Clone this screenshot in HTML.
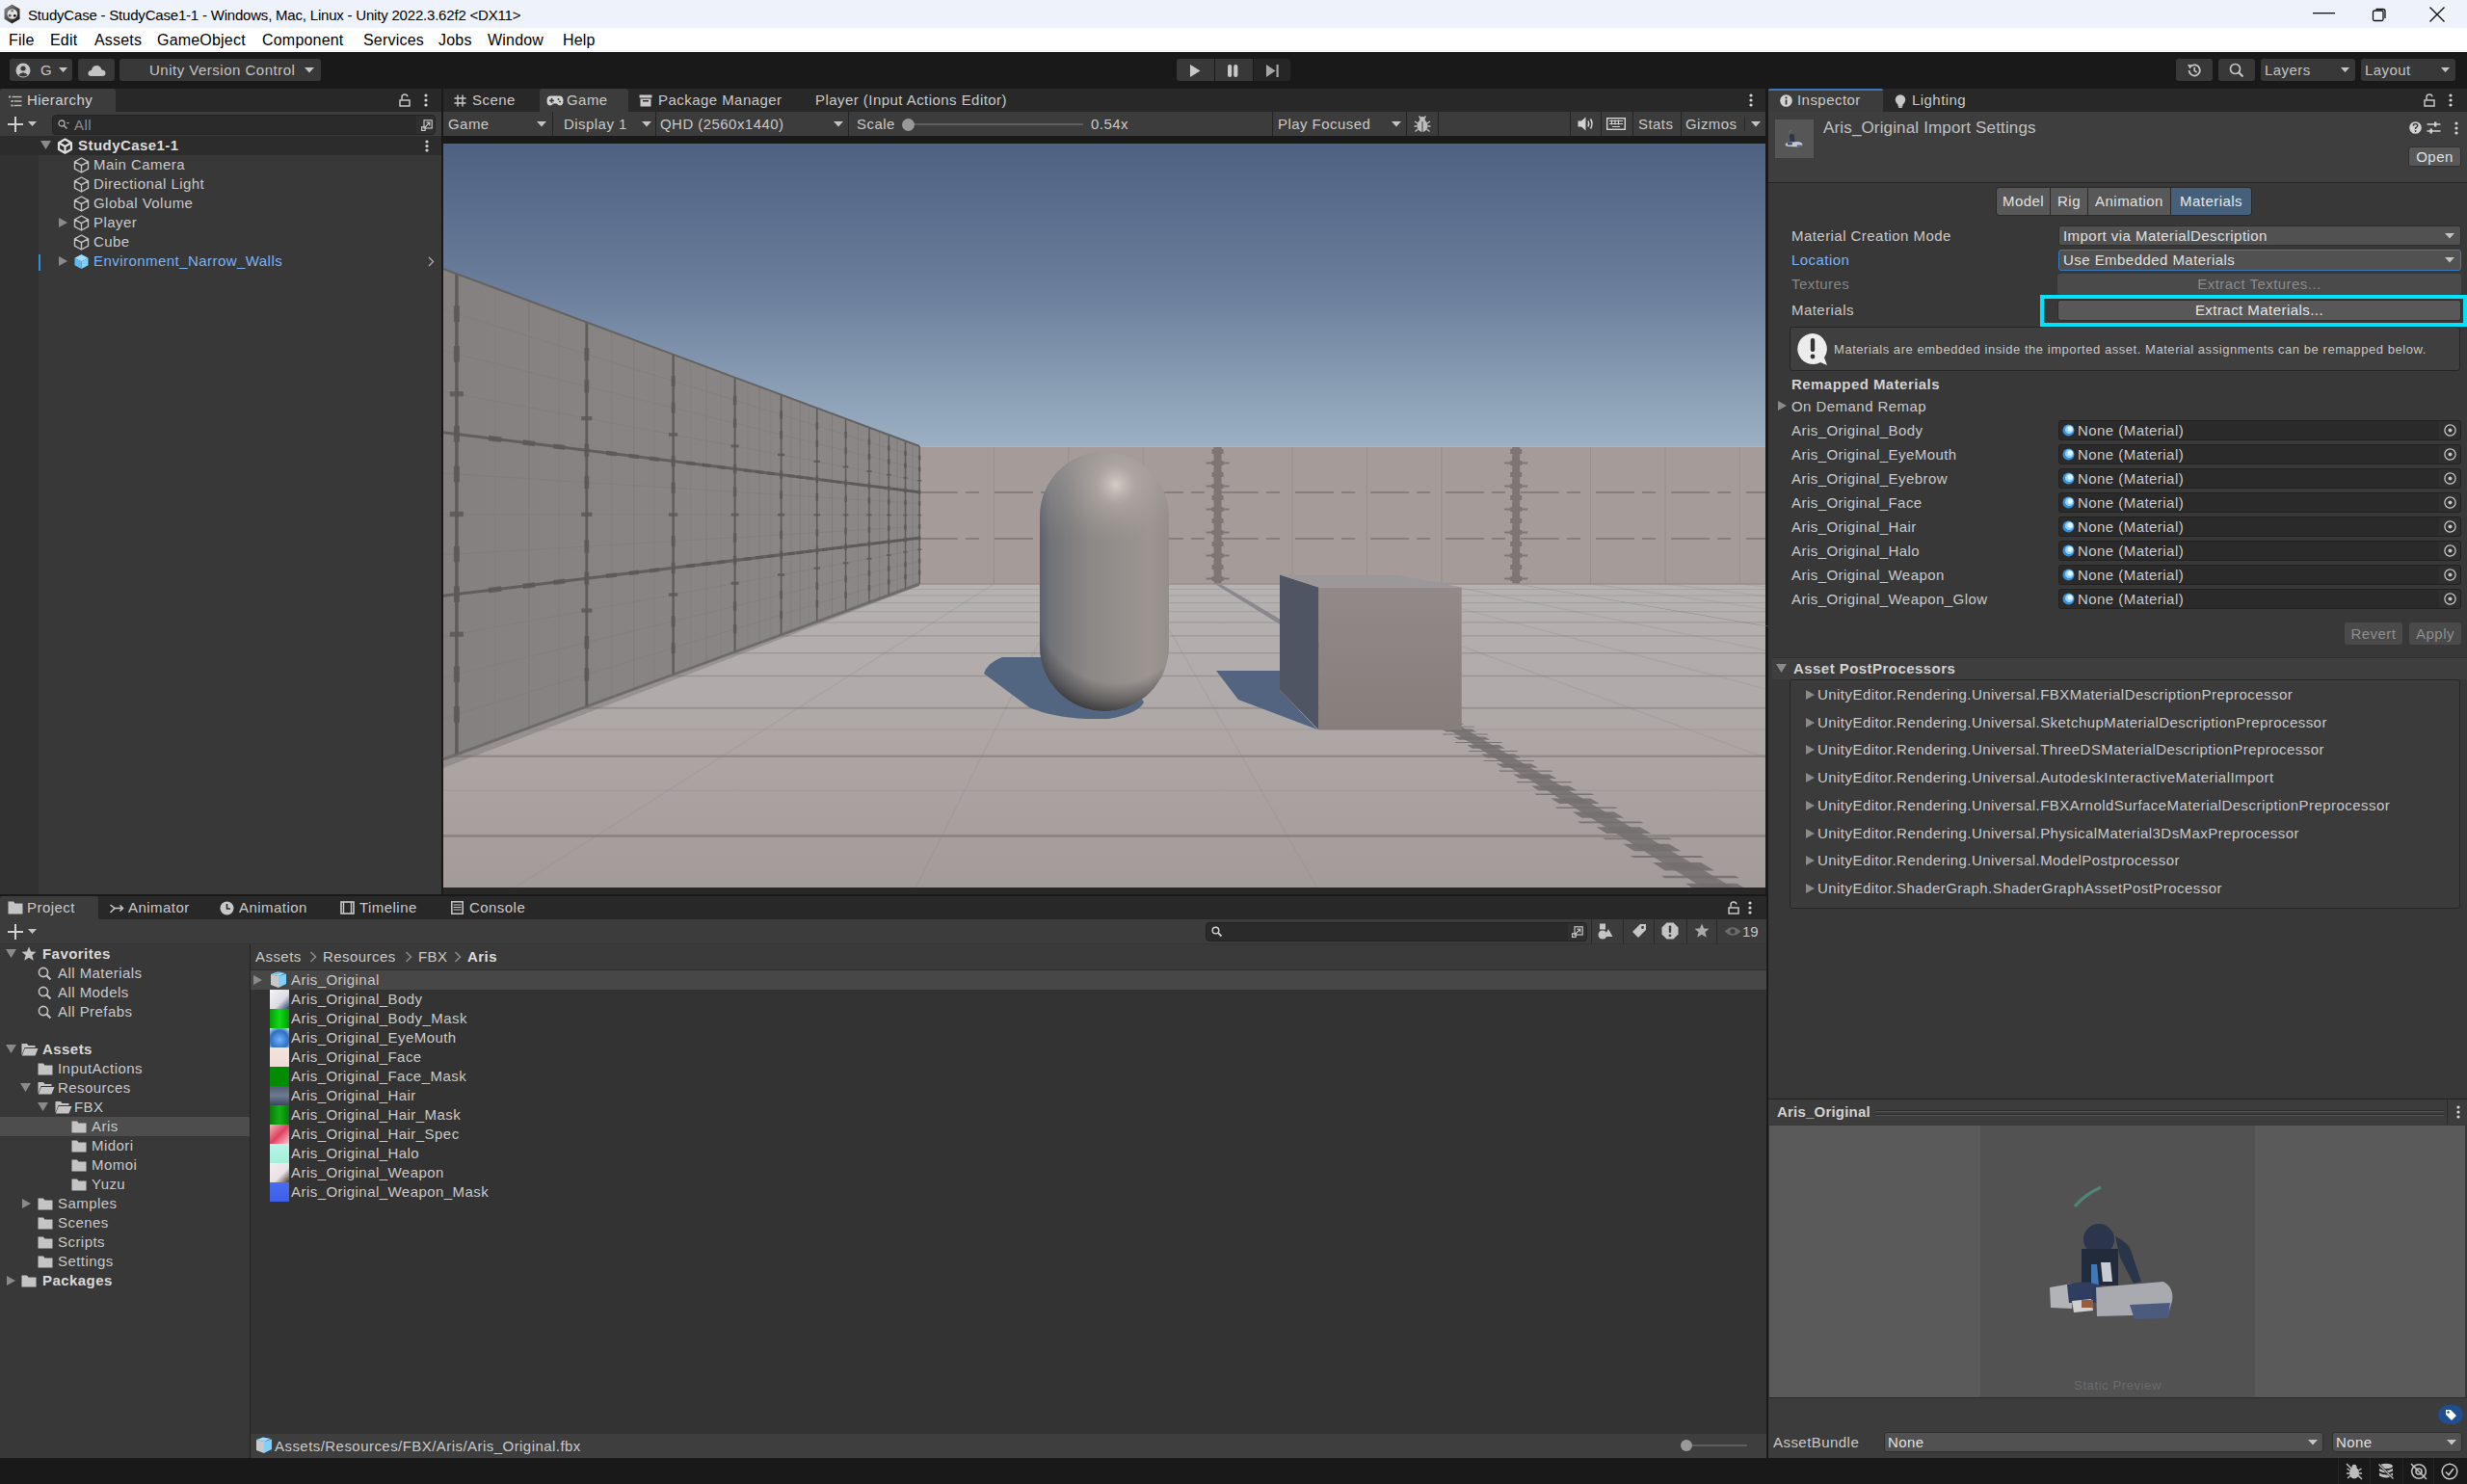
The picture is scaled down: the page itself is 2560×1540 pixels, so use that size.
<!DOCTYPE html>
<html><head><meta charset="utf-8">
<style>
*{box-sizing:border-box;margin:0;padding:0}
html,body{width:2560px;height:1540px;overflow:hidden}
body{background:#191919;font-family:"Liberation Sans",sans-serif;font-size:15px;letter-spacing:0.45px;color:#c9c9c9;position:relative}
.a{position:absolute}
.t{position:absolute;white-space:nowrap}
.tb{background:#282828}
.tab{background:#3c3c3c;border-radius:3px 3px 0 0}
.bar{background:#3c3c3c}
.btn{background:#585858;border-radius:3px}
.dd{background:#515151;border-radius:3px}
svg{position:absolute;overflow:visible}
</style></head><body>
<!-- TITLE BAR -->
<div class="a" style="left:0;top:0;width:2560px;height:29px;background:#eef2fa"></div>
<div class="a" style="left:0;top:29px;width:2560px;height:25px;background:#ffffff"></div>
<div class="a" style="left:0;top:52px;width:2560px;height:1px;background:#eeeeee"></div>
<!-- title contents -->
<svg style="left:3px;top:4px" width="19" height="21" viewBox="0 0 19 21"><defs><linearGradient id="lg1" x1="0" y1="0" x2="1" y2="1"><stop offset="0" stop-color="#9a9a9a"/><stop offset="0.55" stop-color="#444"/><stop offset="1" stop-color="#050505"/></linearGradient></defs><polygon points="9.5,0.6 17.5,5.2 17.5,15.8 9.5,20.4 1.5,15.8 1.5,5.2" fill="url(#lg1)"/><circle cx="9.8" cy="10.5" r="5.3" fill="#e2e2e2"/><circle cx="9.6" cy="7.2" r="1.3" fill="#777"/><circle cx="7.2" cy="12.2" r="1.4" fill="#555"/><circle cx="12.3" cy="12.3" r="1.4" fill="#111"/></svg>
<div class="t" style="left:29px;top:1px;line-height:29px;font-size:15px;letter-spacing:-0.2px;color:#000">StudyCase - StudyCase1-1 - Windows, Mac, Linux - Unity 2022.3.62f2 &lt;DX11&gt;</div>
<svg style="left:2400px;top:13px" width="24" height="2"><rect x="0" y="0" width="23" height="1.3" fill="#111"/></svg>
<svg style="left:2461px;top:7px" width="16" height="16" viewBox="0 0 16 16"><rect x="1.5" y="4" width="10.5" height="10.5" rx="1.5" fill="none" stroke="#111" stroke-width="1.3"/><path d="M4.5,2.5 L12,2.5 Q14,2.5 14,4.5 L14,12" fill="none" stroke="#111" stroke-width="1.3"/></svg>
<svg style="left:2520px;top:6px" width="18" height="18" viewBox="0 0 18 18"><path d="M1.5,1.5 L16.5,16.5 M16.5,1.5 L1.5,16.5" stroke="#111" stroke-width="1.4"/></svg>
<!-- menu -->
<div class="t" style="left:9px;top:29px;line-height:25px;font-size:16px;letter-spacing:0.2px;color:#000">File</div>
<div class="t" style="left:52px;top:29px;line-height:25px;font-size:16px;letter-spacing:0.2px;color:#000">Edit</div>
<div class="t" style="left:98px;top:29px;line-height:25px;font-size:16px;letter-spacing:0.2px;color:#000">Assets</div>
<div class="t" style="left:163px;top:29px;line-height:25px;font-size:16px;letter-spacing:0.2px;color:#000">GameObject</div>
<div class="t" style="left:272px;top:29px;line-height:25px;font-size:16px;letter-spacing:0.2px;color:#000">Component</div>
<div class="t" style="left:377px;top:29px;line-height:25px;font-size:16px;letter-spacing:0.2px;color:#000">Services</div>
<div class="t" style="left:455px;top:29px;line-height:25px;font-size:16px;letter-spacing:0.2px;color:#000">Jobs</div>
<div class="t" style="left:506px;top:29px;line-height:25px;font-size:16px;letter-spacing:0.2px;color:#000">Window</div>
<div class="t" style="left:584px;top:29px;line-height:25px;font-size:16px;letter-spacing:0.2px;color:#000">Help</div>
<!-- TOOLBAR -->
<div class="a" style="left:0;top:54px;width:2560px;height:38px;background:#191919"></div>
<div class="a" style="left:10px;top:61px;width:65px;height:23px;background:#383838;border-radius:3px"></div>
<svg style="left:16px;top:65px" width="16" height="16" viewBox="0 0 16 16"><circle cx="8" cy="8" r="7.5" fill="#c4c4c4"/><circle cx="8" cy="6" r="2.6" fill="#383838"/><path d="M3.2,13 Q8,7.5 12.8,13 Q8,16 3.2,13Z" fill="#383838"/></svg>
<div class="t" style="left:42px;top:61px;line-height:23px;color:#c4c4c4">G</div>
<svg style="left:61px;top:70px" width="10" height="6"><polygon points="0,0 9,0 4.5,5" fill="#c4c4c4"/></svg>
<div class="a" style="left:81px;top:61px;width:38px;height:23px;background:#383838;border-radius:3px"></div>
<svg style="left:91px;top:66px" width="19" height="14" viewBox="0 0 19 14"><path d="M4,13 Q0,13 0.5,9.5 Q1,7 4,7 Q4.5,2.5 9,2 Q13.5,2 14.5,6.5 Q18.5,6.5 18.5,10 Q18.5,13 15,13 Z" fill="#c4c4c4"/></svg>
<div class="a" style="left:124px;top:61px;width:209px;height:23px;background:#383838;border-radius:3px"></div>
<div class="t" style="left:155px;top:61px;line-height:23px;font-size:15px;letter-spacing:0.5px;color:#c4c4c4">Unity Version Control</div>
<svg style="left:316px;top:70px" width="10" height="6"><polygon points="0,0 10,0 5,5.5" fill="#c4c4c4"/></svg>
<div class="a" style="left:1221px;top:61px;width:39px;height:23px;background:#383838;border-radius:3px 0 0 3px"></div>
<div class="a" style="left:1261px;top:61px;width:39px;height:23px;background:#383838"></div>
<div class="a" style="left:1301px;top:61px;width:38px;height:23px;background:#262626;border-radius:0 3px 3px 0"></div>
<svg style="left:1235px;top:67px" width="12" height="13"><polygon points="0,0 10.5,6.5 0,13" fill="#c8c8c8"/></svg>
<svg style="left:1274px;top:67px" width="12" height="13"><rect x="0" y="0" width="4.2" height="13" rx="2" fill="#c8c8c8"/><rect x="6.2" y="0" width="4.2" height="13" rx="2" fill="#c8c8c8"/></svg>
<svg style="left:1314px;top:67px" width="14" height="13"><polygon points="0,0 9.5,6.5 0,13" fill="#a6a6a6"/><rect x="10.5" y="0" width="2.2" height="13" fill="#a6a6a6"/></svg>
<div class="a" style="left:2258px;top:61px;width:38px;height:23px;background:#383838;border-radius:3px"></div>
<svg style="left:2269px;top:65px" width="16" height="16" viewBox="0 0 16 16"><path d="M2.6,8 A5.6,5.6 0 1 0 4.4,3.8" fill="none" stroke="#c4c4c4" stroke-width="1.8"/><polygon points="1,2 6,2.5 3.5,6.5" fill="#c4c4c4"/><path d="M8.2,4.8 L8.2,8.4 L10.6,10" fill="none" stroke="#c4c4c4" stroke-width="1.6"/></svg>
<div class="a" style="left:2302px;top:61px;width:38px;height:23px;background:#383838;border-radius:3px"></div>
<svg style="left:2313px;top:65px" width="16" height="16" viewBox="0 0 16 16"><circle cx="6.5" cy="6.5" r="5" fill="none" stroke="#c4c4c4" stroke-width="1.7"/><path d="M10.2,10.2 L14.5,14.5" stroke="#c4c4c4" stroke-width="2.2"/></svg>
<div class="a" style="left:2346px;top:61px;width:98px;height:23px;background:#383838;border-radius:3px"></div>
<div class="t" style="left:2350px;top:61px;line-height:23px;color:#c4c4c4">Layers</div>
<svg style="left:2429px;top:70px" width="10" height="6"><polygon points="0,0 9,0 4.5,5" fill="#c4c4c4"/></svg>
<div class="a" style="left:2450px;top:61px;width:98px;height:23px;background:#383838;border-radius:3px"></div>
<div class="t" style="left:2454px;top:61px;line-height:23px;color:#c4c4c4">Layout</div>
<svg style="left:2533px;top:70px" width="10" height="6"><polygon points="0,0 9,0 4.5,5" fill="#c4c4c4"/></svg>

<!-- HIERARCHY -->
<div class="a" style="left:0;top:92px;width:458px;height:836px;background:#383838"></div>
<div class="a tb" style="left:0;top:92px;width:458px;height:24px"></div>
<div class="a tab" style="left:0;top:92px;width:120px;height:24px"></div>
<div class="a bar" style="left:0;top:116px;width:458px;height:25px"></div>
<svg style="left:9px;top:99px" width="14" height="12" viewBox="0 0 14 12"><rect x="0" y="0.5" width="2" height="2" fill="#bbb"/><rect x="3.5" y="0.8" width="10" height="1.4" fill="#bbb"/><rect x="2.5" y="5" width="2" height="2" fill="#bbb"/><rect x="5.5" y="5.3" width="8" height="1.4" fill="#bbb"/><rect x="2.5" y="9.5" width="2" height="2" fill="#bbb"/><rect x="5.5" y="9.8" width="8" height="1.4" fill="#bbb"/></svg>
<div class="t" style="left:28px;top:92px;line-height:24px;color:#d2d2d2">Hierarchy</div>
<svg style="left:414px;top:97px" width="12" height="14" viewBox="0 0 12 14"><path d="M3,6.5 L3,3.8 Q3,1 6,1 Q8.6,1 8.9,3.4" fill="none" stroke="#c4c4c4" stroke-width="1.5"/><rect x="1" y="7" width="10" height="6" fill="none" stroke="#c4c4c4" stroke-width="1.5"/></svg>
<svg style="left:440px;top:97px" width="4" height="14"><circle cx="2" cy="2" r="1.6" fill="#d2d2d2"/><circle cx="2" cy="7" r="1.6" fill="#d2d2d2"/><circle cx="2" cy="12" r="1.6" fill="#d2d2d2"/></svg>
<svg style="left:8px;top:121px" width="16" height="16"><rect x="7" y="0" width="2" height="16" fill="#d2d2d2"/><rect x="0" y="7" width="16" height="2" fill="#d2d2d2"/></svg>
<svg style="left:29px;top:126px" width="10" height="6"><polygon points="0,0 9,0 4.5,5" fill="#c4c4c4"/></svg>
<div class="a" style="left:54px;top:119px;width:398px;height:21px;background:#2a2a2a;border:1px solid #222;border-radius:4px"></div>
<div class="a" style="left:432px;top:120px;width:19px;height:19px;background:#303030;border-radius:0 3px 3px 0"></div>
<svg style="left:437px;top:124px" width="12" height="12" viewBox="0 0 12 12"><rect x="3" y="0.8" width="8.2" height="8.2" fill="none" stroke="#c4c4c4" stroke-width="1.2"/><rect x="0.6" y="7.8" width="3.6" height="3.6" fill="none" stroke="#c4c4c4" stroke-width="1.2"/><path d="M3.5,8.5 L8.5,3.5 M5.5,3.2 L8.8,3.2 L8.8,6.5" fill="none" stroke="#c4c4c4" stroke-width="1.2"/></svg>
<svg style="left:60px;top:124px" width="12" height="11" viewBox="0 0 12 11"><circle cx="4" cy="4" r="3" fill="none" stroke="#aaa" stroke-width="1.3"/><path d="M6,6 L9.5,9.5" stroke="#aaa" stroke-width="1.5"/><polygon points="9,3 12,3 10.5,4.8" fill="#aaa"/></svg>
<div class="t" style="left:77px;top:119px;line-height:21px;color:#8c8c8c">All</div>
<div class="a" style="left:0;top:141px;width:458px;height:20px;background:#2c2c2c"></div>
<div class="a" style="left:0;top:161px;width:40px;height:767px;background:#313131"></div>
<svg style="left:42px;top:146px" width="12" height="10"><polygon points="0,0 11,0 5.5,9" fill="#8a8a8a"/></svg>
<svg style="left:59px;top:143px" width="17" height="17" viewBox="0 0 17 17"><path d="M8.5,1.5 L15,5.2 L15,12 L8.5,15.7 L2,12 L2,5.2 Z" fill="none" stroke="#e0e0e0" stroke-width="2.2" stroke-linejoin="round"/><path d="M2.5,5.5 L8.5,9 L14.5,5.5 M8.5,9 L8.5,15.5" fill="none" stroke="#e0e0e0" stroke-width="2.2"/></svg>
<div class="t" style="left:81px;top:141px;line-height:20px;font-weight:bold;color:#dcdcdc">StudyCase1-1</div>
<svg style="left:441px;top:145px" width="4" height="13"><circle cx="2" cy="2" r="1.6" fill="#d2d2d2"/><circle cx="2" cy="6.5" r="1.6" fill="#d2d2d2"/><circle cx="2" cy="11" r="1.6" fill="#d2d2d2"/></svg>
<svg style="left:76px;top:163px" width="17" height="17" viewBox="0 0 17 17"><path d="M8.5,1 L15.5,4.8 L15.5,12.2 L8.5,16 L1.5,12.2 L1.5,4.8 Z M1.5,4.8 L8.5,8.6 L15.5,4.8 M8.5,8.6 L8.5,16" fill="none" stroke="#c4c4c4" stroke-width="1.4" stroke-linejoin="round"/></svg>
<div class="t" style="left:97px;top:161px;line-height:20px">Main Camera</div>
<svg style="left:76px;top:183px" width="17" height="17" viewBox="0 0 17 17"><path d="M8.5,1 L15.5,4.8 L15.5,12.2 L8.5,16 L1.5,12.2 L1.5,4.8 Z M1.5,4.8 L8.5,8.6 L15.5,4.8 M8.5,8.6 L8.5,16" fill="none" stroke="#c4c4c4" stroke-width="1.4" stroke-linejoin="round"/></svg>
<div class="t" style="left:97px;top:181px;line-height:20px">Directional Light</div>
<svg style="left:76px;top:203px" width="17" height="17" viewBox="0 0 17 17"><path d="M8.5,1 L15.5,4.8 L15.5,12.2 L8.5,16 L1.5,12.2 L1.5,4.8 Z M1.5,4.8 L8.5,8.6 L15.5,4.8 M8.5,8.6 L8.5,16" fill="none" stroke="#c4c4c4" stroke-width="1.4" stroke-linejoin="round"/></svg>
<div class="t" style="left:97px;top:201px;line-height:20px">Global Volume</div>
<svg style="left:76px;top:223px" width="17" height="17" viewBox="0 0 17 17"><path d="M8.5,1 L15.5,4.8 L15.5,12.2 L8.5,16 L1.5,12.2 L1.5,4.8 Z M1.5,4.8 L8.5,8.6 L15.5,4.8 M8.5,8.6 L8.5,16" fill="none" stroke="#c4c4c4" stroke-width="1.4" stroke-linejoin="round"/></svg>
<div class="t" style="left:97px;top:221px;line-height:20px">Player</div>
<svg style="left:61px;top:226px" width="10" height="11"><polygon points="0,0 9,5 0,10" fill="#8a8a8a"/></svg>
<svg style="left:76px;top:243px" width="17" height="17" viewBox="0 0 17 17"><path d="M8.5,1 L15.5,4.8 L15.5,12.2 L8.5,16 L1.5,12.2 L1.5,4.8 Z M1.5,4.8 L8.5,8.6 L15.5,4.8 M8.5,8.6 L8.5,16" fill="none" stroke="#c4c4c4" stroke-width="1.4" stroke-linejoin="round"/></svg>
<div class="t" style="left:97px;top:241px;line-height:20px">Cube</div>
<div class="a" style="left:40px;top:264px;width:2px;height:17px;background:#2f8fd8"></div>
<svg style="left:61px;top:266px" width="10" height="11"><polygon points="0,0 9,5 0,10" fill="#8a8a8a"/></svg>
<svg style="left:76px;top:263px" width="17" height="17" viewBox="0 0 17 17"><polygon points="8.5,1 15.5,4.8 8.5,8.6 1.5,4.8" fill="#9fdcff"/><polygon points="1.5,4.8 8.5,8.6 8.5,16 1.5,12.2" fill="#5cbdf0"/><polygon points="15.5,4.8 8.5,8.6 8.5,16 15.5,12.2" fill="#7fd0fa"/></svg>
<div class="t" style="left:97px;top:261px;line-height:20px;color:#7bb2f0">Environment_Narrow_Walls</div>
<svg style="left:444px;top:266px" width="7" height="11"><path d="M1,1 L5.5,5.5 L1,10" fill="none" stroke="#aaa" stroke-width="1.4"/></svg>

<!-- GAME -->
<div class="a" style="left:460px;top:92px;width:1372px;height:836px;background:#282828"></div>
<div class="a tb" style="left:460px;top:92px;width:1372px;height:24px"></div>
<div class="a tab" style="left:560px;top:92px;width:92px;height:24px"></div>
<div class="a bar" style="left:460px;top:116px;width:1372px;height:25px"></div>
<div class="a" style="left:460px;top:141px;width:1372px;height:8px;background:#1a1a1a"></div>
<svg style="left:471px;top:98px" width="13" height="13" viewBox="0 0 13 13"><path d="M4,0.5 L4,12.5 M9,0.5 L9,12.5 M0.5,4 L12.5,4 M0.5,9 L12.5,9" stroke="#c8c8c8" stroke-width="1.4"/></svg>
<div class="t" style="left:490px;top:92px;line-height:24px">Scene</div>
<svg style="left:567px;top:99px" width="18" height="11" viewBox="0 0 18 11"><path d="M4.5,0.5 L13.5,0.5 Q17.5,0.5 17.5,5.5 Q17.5,10.5 14,10.5 Q12,10.5 11,8.5 L7,8.5 Q6,10.5 4,10.5 Q0.5,10.5 0.5,5.5 Q0.5,0.5 4.5,0.5Z" fill="#d2d2d2"/><rect x="3" y="4.6" width="5" height="1.6" fill="#3c3c3c"/><rect x="4.7" y="2.9" width="1.6" height="5" fill="#3c3c3c"/><circle cx="12.5" cy="4" r="1" fill="#3c3c3c"/><circle cx="14" cy="6.5" r="1" fill="#3c3c3c"/></svg>
<div class="t" style="left:588px;top:92px;line-height:24px">Game</div>
<svg style="left:663px;top:98px" width="14" height="13" viewBox="0 0 14 13"><rect x="0.5" y="0.5" width="13" height="3" fill="#c8c8c8"/><path d="M1.5,4.5 L12.5,4.5 L12.5,12.5 L1.5,12.5Z" fill="#c8c8c8"/><rect x="4" y="6" width="6" height="1.5" fill="#282828"/></svg>
<div class="t" style="left:683px;top:92px;line-height:24px">Package Manager</div>
<div class="t" style="left:846px;top:92px;line-height:24px">Player (Input Actions Editor)</div>
<svg style="left:1815px;top:97px" width="4" height="14"><circle cx="2" cy="2" r="1.6" fill="#d2d2d2"/><circle cx="2" cy="7" r="1.6" fill="#d2d2d2"/><circle cx="2" cy="12" r="1.6" fill="#d2d2d2"/></svg>
<div class="t" style="left:465px;top:116px;line-height:25px">Game</div>
<svg style="left:557px;top:126px" width="10" height="6"><polygon points="0,0 10,0 5,5.5" fill="#c4c4c4"/></svg><div class="a" style="left:573px;top:116px;width:1px;height:25px;background:#242424"></div>
<div class="t" style="left:585px;top:116px;line-height:25px">Display 1</div>
<svg style="left:666px;top:126px" width="10" height="6"><polygon points="0,0 10,0 5,5.5" fill="#c4c4c4"/></svg><div class="a" style="left:680px;top:116px;width:1px;height:25px;background:#242424"></div>
<div class="t" style="left:685px;top:116px;line-height:25px">QHD (2560x1440)</div>
<svg style="left:865px;top:126px" width="10" height="6"><polygon points="0,0 10,0 5,5.5" fill="#c4c4c4"/></svg><div class="a" style="left:880px;top:116px;width:1px;height:25px;background:#242424"></div>
<div class="t" style="left:889px;top:116px;line-height:25px">Scale</div>
<div class="a" style="left:942px;top:128px;width:182px;height:2px;background:#5e5e5e"></div>
<div class="a" style="left:936px;top:123px;width:13px;height:13px;border-radius:50%;background:#999"></div>
<div class="t" style="left:1132px;top:116px;line-height:25px">0.54x</div>
<div class="a" style="left:1320px;top:116px;width:1px;height:25px;background:#242424"></div>
<div class="t" style="left:1326px;top:116px;line-height:25px">Play Focused</div>
<svg style="left:1444px;top:126px" width="10" height="6"><polygon points="0,0 10,0 5,5.5" fill="#c4c4c4"/></svg><div class="a" style="left:1459px;top:116px;width:1px;height:25px;background:#242424"></div>
<svg style="left:1466px;top:119px" width="20" height="20" viewBox="0 0 20 20"><ellipse cx="10" cy="11.5" rx="5.5" ry="6.5" fill="#bdbdbd"/><circle cx="10" cy="4.8" r="2.8" fill="#bdbdbd"/><path d="M2,7 L5,9 M18,7 L15,9 M1.5,12 L4.5,12 M18.5,12 L15.5,12 M2.5,17.5 L5.5,15 M17.5,17.5 L14.5,15 M6.5,1.5 L8,3.5 M13.5,1.5 L12,3.5" stroke="#bdbdbd" stroke-width="1.5"/><path d="M10,7 L10,18" stroke="#3c3c3c" stroke-width="1"/></svg>
<div class="a" style="left:1492px;top:116px;width:1px;height:25px;background:#242424"></div><div class="a" style="left:1629px;top:116px;width:1px;height:25px;background:#242424"></div>
<svg style="left:1637px;top:121px" width="17" height="15" viewBox="0 0 17 15"><polygon points="0.5,4.5 4,4.5 8.5,0.5 8.5,14.5 4,10.5 0.5,10.5" fill="#d2d2d2"/><path d="M11,4.5 Q12.5,7.5 11,10.5 M13.5,2.5 Q16.5,7.5 13.5,12.5" fill="none" stroke="#d2d2d2" stroke-width="1.5"/></svg>
<div class="a" style="left:1661px;top:116px;width:1px;height:25px;background:#242424"></div>
<svg style="left:1667px;top:122px" width="20" height="13" viewBox="0 0 20 13"><rect x="0.7" y="0.7" width="18.6" height="11.6" fill="none" stroke="#d2d2d2" stroke-width="1.4"/><path d="M3,3.5 L17,3.5 M3,6.5 L17,6.5 M6,9.5 L14,9.5 M5.5,2.5 L5.5,7.5 M9,2.5 L9,7.5 M12.5,2.5 L12.5,7.5" stroke="#d2d2d2" stroke-width="1.2"/></svg>
<div class="a" style="left:1694px;top:116px;width:1px;height:25px;background:#242424"></div>
<div class="t" style="left:1700px;top:116px;line-height:25px">Stats</div>
<div class="a" style="left:1744px;top:116px;width:1px;height:25px;background:#242424"></div>
<div class="t" style="left:1749px;top:116px;line-height:25px">Gizmos</div>
<div class="a" style="left:1810px;top:121px;width:1px;height:15px;background:#2a2a2a"></div>
<svg style="left:1817px;top:126px" width="10" height="6"><polygon points="0,0 10,0 5,5.5" fill="#c4c4c4"/></svg>
<svg class="a" style="left:460px;top:149px" width="1372" height="772" viewBox="460 149 1372 772">
<defs>
<linearGradient id="sky" x1="0" y1="149" x2="0" y2="463" gradientUnits="userSpaceOnUse">
<stop offset="0" stop-color="#4e6181"/><stop offset="0.5" stop-color="#6c809d"/><stop offset="1" stop-color="#9cb0c3"/></linearGradient>
<linearGradient id="floor" x1="0" y1="606" x2="0" y2="921" gradientUnits="userSpaceOnUse">
<stop offset="0" stop-color="#b7b2b2"/><stop offset="1" stop-color="#a39b99"/></linearGradient>
<linearGradient id="lwall" x1="460" y1="0" x2="954" y2="0" gradientUnits="userSpaceOnUse">
<stop offset="0" stop-color="#858181"/><stop offset="1" stop-color="#8c8888"/></linearGradient>
<linearGradient id="capH" x1="1079" y1="0" x2="1213" y2="0" gradientUnits="userSpaceOnUse">
<stop offset="0" stop-color="#5b606c"/><stop offset="0.08" stop-color="#727378"/><stop offset="0.4" stop-color="#8d8986"/><stop offset="0.85" stop-color="#9c9592"/><stop offset="1" stop-color="#948e8b"/></linearGradient>
<radialGradient id="capHi" cx="1158" cy="503" r="60" gradientUnits="userSpaceOnUse">
<stop offset="0" stop-color="#d8d0ca" stop-opacity="0.95"/><stop offset="0.35" stop-color="#b9b1ad" stop-opacity="0.5"/><stop offset="1" stop-color="#a09894" stop-opacity="0"/></radialGradient>
<radialGradient id="capV" cx="1158" cy="628" r="112" gradientUnits="userSpaceOnUse">
<stop offset="0" stop-color="#333336" stop-opacity="0"/><stop offset="0.72" stop-color="#333336" stop-opacity="0"/><stop offset="0.86" stop-color="#333336" stop-opacity="0.4"/><stop offset="1" stop-color="#2e2e31" stop-opacity="0.85"/></radialGradient>
<linearGradient id="capT" x1="0" y1="469" x2="0" y2="560" gradientUnits="userSpaceOnUse">
<stop offset="0" stop-color="#aaa3a0" stop-opacity="0.5"/><stop offset="1" stop-color="#aaa3a0" stop-opacity="0"/></linearGradient>
<linearGradient id="cubeF" x1="0" y1="609" x2="0" y2="757" gradientUnits="userSpaceOnUse">
<stop offset="0" stop-color="#918a88"/><stop offset="1" stop-color="#867e7b"/></linearGradient>
<clipPath id="capclip"><rect x="1079" y="469" width="134" height="269" rx="67" ry="67"/></clipPath>
</defs>
<rect x="460" y="149" width="1372" height="315" fill="url(#sky)"/>
<polygon points="460,788 954,606 1832,606 1832,921 460,921" fill="url(#floor)"/>
<line x1="939.0" y1="611.5" x2="1832" y2="611.5" stroke="#7a7372" stroke-width="0.85" stroke-opacity="0.29" />
<line x1="921.5" y1="618.0" x2="1832" y2="618.0" stroke="#7a7372" stroke-width="0.91" stroke-opacity="0.30" />
<line x1="900.8" y1="625.6" x2="1832" y2="625.6" stroke="#7a7372" stroke-width="0.98" stroke-opacity="0.31" />
<line x1="876.1" y1="634.7" x2="1832" y2="634.7" stroke="#7a7372" stroke-width="1.06" stroke-opacity="0.32" />
<line x1="845.8" y1="645.9" x2="1832" y2="645.9" stroke="#7a7372" stroke-width="1.16" stroke-opacity="0.34" />
<line x1="808.0" y1="659.8" x2="1832" y2="659.8" stroke="#7a7372" stroke-width="1.29" stroke-opacity="0.36" />
<line x1="759.4" y1="677.7" x2="1832" y2="677.7" stroke="#7a7372" stroke-width="1.45" stroke-opacity="0.38" />
<line x1="694.7" y1="701.5" x2="1832" y2="701.5" stroke="#7a7372" stroke-width="1.67" stroke-opacity="0.42" />
<line x1="604.2" y1="734.8" x2="1832" y2="734.8" stroke="#7a7372" stroke-width="1.97" stroke-opacity="0.46" />
<line x1="468.9" y1="784.7" x2="1832" y2="784.7" stroke="#7a7372" stroke-width="2.42" stroke-opacity="0.54" />
<line x1="460.0" y1="867.5" x2="1832" y2="867.5" stroke="#7a7372" stroke-width="3.18" stroke-opacity="0.58" />
<line x1="544.1" y1="757.0" x2="1832" y2="757.0" stroke="#7a7372" stroke-width="1" stroke-opacity="0.22"/>
<line x1="460.0" y1="820.2" x2="1832" y2="820.2" stroke="#7a7372" stroke-width="1" stroke-opacity="0.22"/>
<polygon points="460,788 954,606 954,608 460,797" fill="#6a6464" fill-opacity="0.35"/>
<line x1="1031.4" y1="606" x2="534.4" y2="921.0" stroke="#8a8382" stroke-width="1.3" stroke-opacity="0.22"/>
<line x1="1108.8" y1="606" x2="950.4" y2="921.0" stroke="#8a8382" stroke-width="1.3" stroke-opacity="0.22"/>
<line x1="1186.2" y1="606" x2="1366.5" y2="921.0" stroke="#8a8382" stroke-width="1.3" stroke-opacity="0.22"/>
<line x1="1341.0" y1="606" x2="1832.0" y2="786.4" stroke="#8a8382" stroke-width="1.3" stroke-opacity="0.22"/>
<line x1="1418.4" y1="606" x2="1832.0" y2="714.9" stroke="#8a8382" stroke-width="1.3" stroke-opacity="0.22"/>
<line x1="1495.8" y1="606" x2="1832.0" y2="675.0" stroke="#8a8382" stroke-width="1.3" stroke-opacity="0.22"/>
<line x1="1650.6" y1="606" x2="1832.0" y2="631.8" stroke="#8a8382" stroke-width="1.3" stroke-opacity="0.22"/>
<line x1="1728.0" y1="606" x2="1832.0" y2="618.8" stroke="#8a8382" stroke-width="1.3" stroke-opacity="0.22"/>
<line x1="1805.4" y1="606" x2="1832.0" y2="608.9" stroke="#8a8382" stroke-width="1.3" stroke-opacity="0.22"/>
<polygon points="1260.7,606.0 1266.5,606.0 1425.1,700.0 1411.8,700.0" fill="#85838a" fill-opacity="0.9"/>
<polygon points="1411.8,700.0 1425.1,700.0 1798.1,921.0 1766.9,921.0" fill="#74706f" fill-opacity="0.85"/>
<polygon points="1484.1,748.9 1514.0,748.9 1519.0,751.9 1488.7,751.9" fill="#74706f" fill-opacity="0.9"/>
<polygon points="1484.3,753.7 1529.5,753.7 1530.9,754.5 1485.6,754.5" fill="#74706f" fill-opacity="0.9"/>
<polygon points="1495.9,756.4 1526.8,756.4 1532.2,759.6 1500.9,759.6" fill="#74706f" fill-opacity="0.9"/>
<polygon points="1496.5,761.6 1543.2,761.6 1544.7,762.4 1497.8,762.4" fill="#74706f" fill-opacity="0.9"/>
<polygon points="1508.6,764.5 1540.6,764.5 1546.4,767.8 1514.0,767.8" fill="#74706f" fill-opacity="0.9"/>
<polygon points="1509.5,770.0 1558.0,770.0 1559.6,770.9 1510.9,770.9" fill="#74706f" fill-opacity="0.9"/>
<polygon points="1522.3,773.1 1555.5,773.1 1561.7,776.8 1528.0,776.8" fill="#74706f" fill-opacity="0.9"/>
<polygon points="1523.5,779.1 1573.9,779.1 1575.6,780.1 1525.0,780.1" fill="#74706f" fill-opacity="0.9"/>
<polygon points="1537.0,782.4 1571.5,782.4 1578.2,786.4 1543.2,786.4" fill="#74706f" fill-opacity="0.9"/>
<polygon points="1538.6,788.9 1591.0,788.9 1592.9,790.0 1540.3,790.0" fill="#74706f" fill-opacity="0.9"/>
<polygon points="1552.9,792.5 1588.8,792.5 1596.1,796.8 1559.6,796.8" fill="#74706f" fill-opacity="0.9"/>
<polygon points="1555.0,799.5 1609.6,799.5 1611.7,800.7 1556.9,800.7" fill="#74706f" fill-opacity="0.9"/>
<polygon points="1570.1,803.5 1607.6,803.5 1615.5,808.1 1577.4,808.1" fill="#74706f" fill-opacity="0.9"/>
<polygon points="1572.9,811.0 1629.8,811.0 1632.1,812.3 1574.8,812.3" fill="#74706f" fill-opacity="0.9"/>
<polygon points="1588.9,815.4 1628.0,815.4 1636.6,820.4 1596.9,820.4" fill="#74706f" fill-opacity="0.9"/>
<polygon points="1592.3,823.6 1651.8,823.6 1654.3,825.0 1594.5,825.0" fill="#74706f" fill-opacity="0.9"/>
<polygon points="1609.4,828.4 1650.3,828.4 1659.8,833.9 1618.1,833.9" fill="#74706f" fill-opacity="0.9"/>
<polygon points="1613.6,837.4 1676.0,837.4 1678.7,839.0 1616.0,839.0" fill="#74706f" fill-opacity="0.9"/>
<polygon points="1631.9,842.6 1674.8,842.6 1685.2,848.7 1641.5,848.7" fill="#74706f" fill-opacity="0.9"/>
<polygon points="1637.0,852.6 1702.5,852.6 1705.5,854.3 1639.7,854.3" fill="#74706f" fill-opacity="0.9"/>
<polygon points="1656.7,858.3 1701.8,858.3 1713.3,865.0 1667.3,865.0" fill="#74706f" fill-opacity="0.9"/>
<polygon points="1662.9,869.4 1731.9,869.4 1735.2,871.2 1665.8,871.2" fill="#74706f" fill-opacity="0.9"/>
<polygon points="1684.2,875.7 1731.6,875.7 1744.4,883.2 1695.9,883.2" fill="#74706f" fill-opacity="0.9"/>
<polygon points="1691.7,888.0 1764.5,888.0 1768.1,890.1 1695.0,890.1" fill="#74706f" fill-opacity="0.9"/>
<polygon points="1714.7,895.1 1764.9,895.1 1779.2,903.4 1727.9,903.4" fill="#74706f" fill-opacity="0.9"/>
<polygon points="1723.9,908.8 1800.9,908.8 1805.0,911.2 1727.5,911.2" fill="#74706f" fill-opacity="0.9"/>
<polygon points="1748.9,916.8 1802.1,916.8 1809.3,921.0 1755.6,921.0" fill="#74706f" fill-opacity="0.9"/>
<polygon points="1572.4,606.0 1574.0,606.0 2134.1,700.0 2130.4,700.0" fill="#85838a" fill-opacity="0.9"/>
<polygon points="2130.4,700.0 2134.1,700.0 3450.9,921.0 3442.3,921.0" fill="#74706f" fill-opacity="0.85"/>
<rect x="954" y="463" width="878" height="143" fill="#a59c99"/>
<line x1="1031.4" y1="463" x2="1031.4" y2="606" stroke="#8f8784" stroke-width="1" stroke-opacity="0.6"/>
<line x1="1108.8" y1="463" x2="1108.8" y2="606" stroke="#8f8784" stroke-width="1" stroke-opacity="0.6"/>
<line x1="1186.2" y1="463" x2="1186.2" y2="606" stroke="#8f8784" stroke-width="1" stroke-opacity="0.6"/>
<rect x="1259.6" y="463" width="8" height="143" fill="#7e7674"/>
<rect x="1257.6" y="466" width="12" height="5" fill="#7e7674"/>
<rect x="1257.6" y="478" width="12" height="5" fill="#7e7674"/>
<rect x="1251.6" y="479.5" width="24" height="2" fill="#7e7674"/>
<rect x="1257.6" y="490" width="12" height="5" fill="#7e7674"/>
<rect x="1257.6" y="502" width="12" height="5" fill="#7e7674"/>
<rect x="1251.6" y="503.5" width="24" height="2" fill="#7e7674"/>
<rect x="1257.6" y="514" width="12" height="5" fill="#7e7674"/>
<rect x="1257.6" y="526" width="12" height="5" fill="#7e7674"/>
<rect x="1251.6" y="527.5" width="24" height="2" fill="#7e7674"/>
<rect x="1257.6" y="538" width="12" height="5" fill="#7e7674"/>
<rect x="1257.6" y="550" width="12" height="5" fill="#7e7674"/>
<rect x="1251.6" y="551.5" width="24" height="2" fill="#7e7674"/>
<rect x="1257.6" y="562" width="12" height="5" fill="#7e7674"/>
<rect x="1257.6" y="574" width="12" height="5" fill="#7e7674"/>
<rect x="1251.6" y="575.5" width="24" height="2" fill="#7e7674"/>
<rect x="1257.6" y="586" width="12" height="5" fill="#7e7674"/>
<rect x="1257.6" y="598" width="12" height="5" fill="#7e7674"/>
<rect x="1251.6" y="599.5" width="24" height="2" fill="#7e7674"/>
<line x1="1341.0" y1="463" x2="1341.0" y2="606" stroke="#8f8784" stroke-width="1" stroke-opacity="0.6"/>
<line x1="1418.4" y1="463" x2="1418.4" y2="606" stroke="#8f8784" stroke-width="1" stroke-opacity="0.6"/>
<line x1="1495.8" y1="463" x2="1495.8" y2="606" stroke="#8f8784" stroke-width="1" stroke-opacity="0.6"/>
<rect x="1569.2" y="463" width="8" height="143" fill="#7e7674"/>
<rect x="1567.2" y="466" width="12" height="5" fill="#7e7674"/>
<rect x="1567.2" y="478" width="12" height="5" fill="#7e7674"/>
<rect x="1561.2" y="479.5" width="24" height="2" fill="#7e7674"/>
<rect x="1567.2" y="490" width="12" height="5" fill="#7e7674"/>
<rect x="1567.2" y="502" width="12" height="5" fill="#7e7674"/>
<rect x="1561.2" y="503.5" width="24" height="2" fill="#7e7674"/>
<rect x="1567.2" y="514" width="12" height="5" fill="#7e7674"/>
<rect x="1567.2" y="526" width="12" height="5" fill="#7e7674"/>
<rect x="1561.2" y="527.5" width="24" height="2" fill="#7e7674"/>
<rect x="1567.2" y="538" width="12" height="5" fill="#7e7674"/>
<rect x="1567.2" y="550" width="12" height="5" fill="#7e7674"/>
<rect x="1561.2" y="551.5" width="24" height="2" fill="#7e7674"/>
<rect x="1567.2" y="562" width="12" height="5" fill="#7e7674"/>
<rect x="1567.2" y="574" width="12" height="5" fill="#7e7674"/>
<rect x="1561.2" y="575.5" width="24" height="2" fill="#7e7674"/>
<rect x="1567.2" y="586" width="12" height="5" fill="#7e7674"/>
<rect x="1567.2" y="598" width="12" height="5" fill="#7e7674"/>
<rect x="1561.2" y="599.5" width="24" height="2" fill="#7e7674"/>
<line x1="1650.6" y1="463" x2="1650.6" y2="606" stroke="#8f8784" stroke-width="1" stroke-opacity="0.6"/>
<line x1="1728.0" y1="463" x2="1728.0" y2="606" stroke="#8f8784" stroke-width="1" stroke-opacity="0.6"/>
<line x1="1805.4" y1="463" x2="1805.4" y2="606" stroke="#8f8784" stroke-width="1" stroke-opacity="0.6"/>
<line x1="954" y1="511" x2="1832" y2="511" stroke="#7e7674" stroke-width="2" stroke-dasharray="40 8 14 16" stroke-opacity="0.75"/>
<line x1="954" y1="559" x2="1832" y2="559" stroke="#7e7674" stroke-width="2" stroke-dasharray="40 8 14 16" stroke-opacity="0.75"/>
<line x1="954" y1="606" x2="1832" y2="606" stroke="#978f8d" stroke-width="1.5"/>
<line x1="954" y1="463.5" x2="1832" y2="463.5" stroke="#b8b4b4" stroke-width="1"/>
<polygon points="460,279 954,463 954,606 460,788" fill="url(#lwall)"/>
<line x1="460" y1="321.4" x2="954" y2="474.9" stroke="#7a7676" stroke-width="1" stroke-opacity="0.35"/>
<line x1="460" y1="363.8" x2="954" y2="486.8" stroke="#7a7676" stroke-width="1" stroke-opacity="0.35"/>
<line x1="460" y1="406.2" x2="954" y2="498.8" stroke="#7a7676" stroke-width="1" stroke-opacity="0.35"/>
<line x1="460" y1="491.1" x2="954" y2="522.6" stroke="#7a7676" stroke-width="1" stroke-opacity="0.35"/>
<line x1="460" y1="533.5" x2="954" y2="534.5" stroke="#7a7676" stroke-width="1" stroke-opacity="0.35"/>
<line x1="460" y1="575.9" x2="954" y2="546.4" stroke="#7a7676" stroke-width="1" stroke-opacity="0.35"/>
<line x1="460" y1="660.8" x2="954" y2="570.2" stroke="#7a7676" stroke-width="1" stroke-opacity="0.35"/>
<line x1="460" y1="703.2" x2="954" y2="582.2" stroke="#7a7676" stroke-width="1" stroke-opacity="0.35"/>
<line x1="460" y1="745.6" x2="954" y2="594.1" stroke="#7a7676" stroke-width="1" stroke-opacity="0.35"/>
<line x1="473.9" y1="284.2" x2="473.9" y2="782.9" stroke="#5b5858" stroke-width="3.60" stroke-opacity="0.9"/>
<rect x="470.9" y="317.4" width="6.0" height="16.6" fill="#5b5858" fill-opacity="0.85"/>
<rect x="470.9" y="359.0" width="6.0" height="16.6" fill="#5b5858" fill-opacity="0.85"/>
<rect x="466.9" y="406.2" width="14.0" height="5.2" fill="#5b5858" fill-opacity="0.85"/>
<rect x="470.9" y="442.1" width="6.0" height="16.6" fill="#5b5858" fill-opacity="0.85"/>
<rect x="470.9" y="483.7" width="6.0" height="16.6" fill="#5b5858" fill-opacity="0.85"/>
<rect x="466.9" y="530.9" width="14.0" height="5.2" fill="#5b5858" fill-opacity="0.85"/>
<rect x="470.9" y="566.8" width="6.0" height="16.6" fill="#5b5858" fill-opacity="0.85"/>
<rect x="470.9" y="608.3" width="6.0" height="16.6" fill="#5b5858" fill-opacity="0.85"/>
<rect x="466.9" y="655.6" width="14.0" height="5.2" fill="#5b5858" fill-opacity="0.85"/>
<rect x="470.9" y="691.5" width="6.0" height="16.6" fill="#5b5858" fill-opacity="0.85"/>
<rect x="470.9" y="733.0" width="6.0" height="16.6" fill="#5b5858" fill-opacity="0.85"/>
<line x1="513.6" y1="299.0" x2="513.6" y2="768.3" stroke="#7c7878" stroke-width="1" stroke-opacity="0.3"/>
<line x1="548.9" y1="312.1" x2="548.9" y2="755.3" stroke="#767272" stroke-width="1" stroke-opacity="0.55"/>
<line x1="580.4" y1="323.9" x2="580.4" y2="743.6" stroke="#7c7878" stroke-width="1" stroke-opacity="0.3"/>
<line x1="608.8" y1="334.4" x2="608.8" y2="733.2" stroke="#5b5858" stroke-width="2.88" stroke-opacity="0.9"/>
<rect x="606.4" y="361.0" width="4.8" height="13.3" fill="#5b5858" fill-opacity="0.85"/>
<rect x="606.4" y="394.2" width="4.8" height="13.3" fill="#5b5858" fill-opacity="0.85"/>
<rect x="603.2" y="432.0" width="11.2" height="4.2" fill="#5b5858" fill-opacity="0.85"/>
<rect x="606.4" y="460.7" width="4.8" height="13.3" fill="#5b5858" fill-opacity="0.85"/>
<rect x="606.4" y="493.9" width="4.8" height="13.3" fill="#5b5858" fill-opacity="0.85"/>
<rect x="603.2" y="531.7" width="11.2" height="4.2" fill="#5b5858" fill-opacity="0.85"/>
<rect x="606.4" y="560.4" width="4.8" height="13.3" fill="#5b5858" fill-opacity="0.85"/>
<rect x="606.4" y="593.6" width="4.8" height="13.3" fill="#5b5858" fill-opacity="0.85"/>
<rect x="603.2" y="631.4" width="11.2" height="4.2" fill="#5b5858" fill-opacity="0.85"/>
<rect x="606.4" y="660.1" width="4.8" height="13.3" fill="#5b5858" fill-opacity="0.85"/>
<rect x="606.4" y="693.3" width="4.8" height="13.3" fill="#5b5858" fill-opacity="0.85"/>
<line x1="634.5" y1="344.0" x2="634.5" y2="723.7" stroke="#7c7878" stroke-width="1" stroke-opacity="0.3"/>
<line x1="657.8" y1="352.7" x2="657.8" y2="715.1" stroke="#767272" stroke-width="1" stroke-opacity="0.55"/>
<line x1="679.1" y1="360.6" x2="679.1" y2="707.3" stroke="#7c7878" stroke-width="1" stroke-opacity="0.3"/>
<line x1="698.6" y1="367.9" x2="698.6" y2="700.1" stroke="#5b5858" stroke-width="2.40" stroke-opacity="0.9"/>
<rect x="696.6" y="390.0" width="4.0" height="11.1" fill="#5b5858" fill-opacity="0.85"/>
<rect x="696.6" y="417.7" width="4.0" height="11.1" fill="#5b5858" fill-opacity="0.85"/>
<rect x="693.9" y="449.2" width="9.3" height="3.5" fill="#5b5858" fill-opacity="0.85"/>
<rect x="696.6" y="473.1" width="4.0" height="11.1" fill="#5b5858" fill-opacity="0.85"/>
<rect x="696.6" y="500.8" width="4.0" height="11.1" fill="#5b5858" fill-opacity="0.85"/>
<rect x="693.9" y="532.3" width="9.3" height="3.5" fill="#5b5858" fill-opacity="0.85"/>
<rect x="696.6" y="556.1" width="4.0" height="11.1" fill="#5b5858" fill-opacity="0.85"/>
<rect x="696.6" y="583.8" width="4.0" height="11.1" fill="#5b5858" fill-opacity="0.85"/>
<rect x="693.9" y="615.3" width="9.3" height="3.5" fill="#5b5858" fill-opacity="0.85"/>
<rect x="696.6" y="639.2" width="4.0" height="11.1" fill="#5b5858" fill-opacity="0.85"/>
<rect x="696.6" y="666.9" width="4.0" height="11.1" fill="#5b5858" fill-opacity="0.85"/>
<line x1="716.5" y1="374.5" x2="716.5" y2="693.5" stroke="#7c7878" stroke-width="1" stroke-opacity="0.3"/>
<line x1="733.1" y1="380.7" x2="733.1" y2="687.4" stroke="#767272" stroke-width="1" stroke-opacity="0.55"/>
<line x1="748.4" y1="386.4" x2="748.4" y2="681.8" stroke="#7c7878" stroke-width="1" stroke-opacity="0.3"/>
<line x1="762.6" y1="391.7" x2="762.6" y2="676.5" stroke="#5b5858" stroke-width="2.05" stroke-opacity="0.9"/>
<rect x="760.9" y="410.7" width="3.4" height="9.5" fill="#5b5858" fill-opacity="0.85"/>
<rect x="760.9" y="434.4" width="3.4" height="9.5" fill="#5b5858" fill-opacity="0.85"/>
<rect x="758.6" y="461.4" width="8.0" height="3.0" fill="#5b5858" fill-opacity="0.85"/>
<rect x="760.9" y="481.9" width="3.4" height="9.5" fill="#5b5858" fill-opacity="0.85"/>
<rect x="760.9" y="505.6" width="3.4" height="9.5" fill="#5b5858" fill-opacity="0.85"/>
<rect x="758.6" y="532.6" width="8.0" height="3.0" fill="#5b5858" fill-opacity="0.85"/>
<rect x="760.9" y="553.1" width="3.4" height="9.5" fill="#5b5858" fill-opacity="0.85"/>
<rect x="760.9" y="576.8" width="3.4" height="9.5" fill="#5b5858" fill-opacity="0.85"/>
<rect x="758.6" y="603.8" width="8.0" height="3.0" fill="#5b5858" fill-opacity="0.85"/>
<rect x="760.9" y="624.3" width="3.4" height="9.5" fill="#5b5858" fill-opacity="0.85"/>
<rect x="760.9" y="648.0" width="3.4" height="9.5" fill="#5b5858" fill-opacity="0.85"/>
<line x1="775.8" y1="396.6" x2="775.8" y2="671.6" stroke="#7c7878" stroke-width="1" stroke-opacity="0.3"/>
<line x1="788.2" y1="401.2" x2="788.2" y2="667.1" stroke="#767272" stroke-width="1" stroke-opacity="0.55"/>
<line x1="799.7" y1="405.5" x2="799.7" y2="662.8" stroke="#7c7878" stroke-width="1" stroke-opacity="0.3"/>
<line x1="810.6" y1="409.6" x2="810.6" y2="658.8" stroke="#5b5858" stroke-width="1.79" stroke-opacity="0.9"/>
<rect x="809.1" y="426.2" width="3.0" height="8.3" fill="#5b5858" fill-opacity="0.85"/>
<rect x="809.1" y="447.0" width="3.0" height="8.3" fill="#5b5858" fill-opacity="0.85"/>
<rect x="807.1" y="470.6" width="7.0" height="2.6" fill="#5b5858" fill-opacity="0.85"/>
<rect x="809.1" y="488.5" width="3.0" height="8.3" fill="#5b5858" fill-opacity="0.85"/>
<rect x="809.1" y="509.3" width="3.0" height="8.3" fill="#5b5858" fill-opacity="0.85"/>
<rect x="807.1" y="532.9" width="7.0" height="2.6" fill="#5b5858" fill-opacity="0.85"/>
<rect x="809.1" y="550.8" width="3.0" height="8.3" fill="#5b5858" fill-opacity="0.85"/>
<rect x="809.1" y="571.6" width="3.0" height="8.3" fill="#5b5858" fill-opacity="0.85"/>
<rect x="807.1" y="595.2" width="7.0" height="2.6" fill="#5b5858" fill-opacity="0.85"/>
<rect x="809.1" y="613.1" width="3.0" height="8.3" fill="#5b5858" fill-opacity="0.85"/>
<rect x="809.1" y="633.9" width="3.0" height="8.3" fill="#5b5858" fill-opacity="0.85"/>
<line x1="820.7" y1="413.4" x2="820.7" y2="655.1" stroke="#7c7878" stroke-width="1" stroke-opacity="0.3"/>
<line x1="830.3" y1="416.9" x2="830.3" y2="651.6" stroke="#767272" stroke-width="1" stroke-opacity="0.55"/>
<line x1="839.3" y1="420.3" x2="839.3" y2="648.3" stroke="#7c7878" stroke-width="1" stroke-opacity="0.3"/>
<line x1="847.8" y1="423.5" x2="847.8" y2="645.1" stroke="#5b5858" stroke-width="1.59" stroke-opacity="0.9"/>
<rect x="846.5" y="438.2" width="2.7" height="7.4" fill="#5b5858" fill-opacity="0.85"/>
<rect x="846.5" y="456.7" width="2.7" height="7.4" fill="#5b5858" fill-opacity="0.85"/>
<rect x="844.7" y="477.7" width="6.2" height="2.3" fill="#5b5858" fill-opacity="0.85"/>
<rect x="846.5" y="493.6" width="2.7" height="7.4" fill="#5b5858" fill-opacity="0.85"/>
<rect x="846.5" y="512.1" width="2.7" height="7.4" fill="#5b5858" fill-opacity="0.85"/>
<rect x="844.7" y="533.1" width="6.2" height="2.3" fill="#5b5858" fill-opacity="0.85"/>
<rect x="846.5" y="549.1" width="2.7" height="7.4" fill="#5b5858" fill-opacity="0.85"/>
<rect x="846.5" y="567.5" width="2.7" height="7.4" fill="#5b5858" fill-opacity="0.85"/>
<rect x="844.7" y="588.5" width="6.2" height="2.3" fill="#5b5858" fill-opacity="0.85"/>
<rect x="846.5" y="604.5" width="2.7" height="7.4" fill="#5b5858" fill-opacity="0.85"/>
<rect x="846.5" y="623.0" width="2.7" height="7.4" fill="#5b5858" fill-opacity="0.85"/>
<line x1="863.5" y1="429.3" x2="863.5" y2="639.3" stroke="#767272" stroke-width="1" stroke-opacity="0.55"/>
<line x1="877.6" y1="434.6" x2="877.6" y2="634.1" stroke="#5b5858" stroke-width="1.50" stroke-opacity="0.9"/>
<rect x="876.4" y="447.9" width="2.5" height="6.7" fill="#5b5858" fill-opacity="0.85"/>
<rect x="876.4" y="464.5" width="2.5" height="6.7" fill="#5b5858" fill-opacity="0.85"/>
<rect x="874.8" y="483.4" width="5.6" height="2.1" fill="#5b5858" fill-opacity="0.85"/>
<rect x="876.4" y="497.8" width="2.5" height="6.7" fill="#5b5858" fill-opacity="0.85"/>
<rect x="876.4" y="514.4" width="2.5" height="6.7" fill="#5b5858" fill-opacity="0.85"/>
<rect x="874.8" y="533.3" width="5.6" height="2.1" fill="#5b5858" fill-opacity="0.85"/>
<rect x="876.4" y="547.7" width="2.5" height="6.7" fill="#5b5858" fill-opacity="0.85"/>
<rect x="876.4" y="564.3" width="2.5" height="6.7" fill="#5b5858" fill-opacity="0.85"/>
<rect x="874.8" y="583.2" width="5.6" height="2.1" fill="#5b5858" fill-opacity="0.85"/>
<rect x="876.4" y="597.5" width="2.5" height="6.7" fill="#5b5858" fill-opacity="0.85"/>
<rect x="876.4" y="614.2" width="2.5" height="6.7" fill="#5b5858" fill-opacity="0.85"/>
<line x1="890.4" y1="439.3" x2="890.4" y2="629.4" stroke="#767272" stroke-width="1" stroke-opacity="0.55"/>
<line x1="902.0" y1="443.6" x2="902.0" y2="625.2" stroke="#5b5858" stroke-width="1.50" stroke-opacity="0.9"/>
<rect x="900.7" y="455.7" width="2.5" height="6.1" fill="#5b5858" fill-opacity="0.85"/>
<rect x="900.7" y="470.9" width="2.5" height="6.1" fill="#5b5858" fill-opacity="0.85"/>
<rect x="899.5" y="488.1" width="5.1" height="1.9" fill="#5b5858" fill-opacity="0.85"/>
<rect x="900.7" y="501.1" width="2.5" height="6.1" fill="#5b5858" fill-opacity="0.85"/>
<rect x="900.7" y="516.2" width="2.5" height="6.1" fill="#5b5858" fill-opacity="0.85"/>
<rect x="899.5" y="533.4" width="5.1" height="1.9" fill="#5b5858" fill-opacity="0.85"/>
<rect x="900.7" y="546.5" width="2.5" height="6.1" fill="#5b5858" fill-opacity="0.85"/>
<rect x="900.7" y="561.6" width="2.5" height="6.1" fill="#5b5858" fill-opacity="0.85"/>
<rect x="899.5" y="578.8" width="5.1" height="1.9" fill="#5b5858" fill-opacity="0.85"/>
<rect x="900.7" y="591.9" width="2.5" height="6.1" fill="#5b5858" fill-opacity="0.85"/>
<rect x="900.7" y="607.0" width="2.5" height="6.1" fill="#5b5858" fill-opacity="0.85"/>
<line x1="912.6" y1="447.6" x2="912.6" y2="621.3" stroke="#767272" stroke-width="1" stroke-opacity="0.55"/>
<line x1="922.3" y1="451.2" x2="922.3" y2="617.7" stroke="#5b5858" stroke-width="1.50" stroke-opacity="0.9"/>
<rect x="921.0" y="462.3" width="2.5" height="5.5" fill="#5b5858" fill-opacity="0.85"/>
<rect x="921.0" y="476.2" width="2.5" height="5.5" fill="#5b5858" fill-opacity="0.85"/>
<rect x="920.0" y="491.9" width="4.6" height="1.7" fill="#5b5858" fill-opacity="0.85"/>
<rect x="921.0" y="503.9" width="2.5" height="5.5" fill="#5b5858" fill-opacity="0.85"/>
<rect x="921.0" y="517.8" width="2.5" height="5.5" fill="#5b5858" fill-opacity="0.85"/>
<rect x="920.0" y="533.6" width="4.6" height="1.7" fill="#5b5858" fill-opacity="0.85"/>
<rect x="921.0" y="545.5" width="2.5" height="5.5" fill="#5b5858" fill-opacity="0.85"/>
<rect x="921.0" y="559.4" width="2.5" height="5.5" fill="#5b5858" fill-opacity="0.85"/>
<rect x="920.0" y="575.2" width="4.6" height="1.7" fill="#5b5858" fill-opacity="0.85"/>
<rect x="921.0" y="587.2" width="2.5" height="5.5" fill="#5b5858" fill-opacity="0.85"/>
<rect x="921.0" y="601.0" width="2.5" height="5.5" fill="#5b5858" fill-opacity="0.85"/>
<line x1="931.2" y1="454.5" x2="931.2" y2="614.4" stroke="#767272" stroke-width="1" stroke-opacity="0.55"/>
<line x1="939.5" y1="457.6" x2="939.5" y2="611.4" stroke="#5b5858" stroke-width="1.50" stroke-opacity="0.9"/>
<rect x="938.2" y="467.8" width="2.5" height="5.1" fill="#5b5858" fill-opacity="0.85"/>
<rect x="938.2" y="480.6" width="2.5" height="5.1" fill="#5b5858" fill-opacity="0.85"/>
<rect x="937.3" y="495.2" width="4.3" height="1.6" fill="#5b5858" fill-opacity="0.85"/>
<rect x="938.2" y="506.3" width="2.5" height="5.1" fill="#5b5858" fill-opacity="0.85"/>
<rect x="938.2" y="519.1" width="2.5" height="5.1" fill="#5b5858" fill-opacity="0.85"/>
<rect x="937.3" y="533.7" width="4.3" height="1.6" fill="#5b5858" fill-opacity="0.85"/>
<rect x="938.2" y="544.7" width="2.5" height="5.1" fill="#5b5858" fill-opacity="0.85"/>
<rect x="938.2" y="557.5" width="2.5" height="5.1" fill="#5b5858" fill-opacity="0.85"/>
<rect x="937.3" y="572.1" width="4.3" height="1.6" fill="#5b5858" fill-opacity="0.85"/>
<rect x="938.2" y="583.2" width="2.5" height="5.1" fill="#5b5858" fill-opacity="0.85"/>
<rect x="938.2" y="596.0" width="2.5" height="5.1" fill="#5b5858" fill-opacity="0.85"/>
<line x1="947.1" y1="460.4" x2="947.1" y2="608.6" stroke="#767272" stroke-width="1" stroke-opacity="0.55"/>
<line x1="954.2" y1="463.1" x2="954.2" y2="605.9" stroke="#5b5858" stroke-width="1.50" stroke-opacity="0.9"/>
<rect x="952.9" y="472.6" width="2.5" height="4.8" fill="#5b5858" fill-opacity="0.85"/>
<rect x="952.9" y="484.5" width="2.5" height="4.8" fill="#5b5858" fill-opacity="0.85"/>
<rect x="952.2" y="498.0" width="4.0" height="1.5" fill="#5b5858" fill-opacity="0.85"/>
<rect x="952.9" y="508.3" width="2.5" height="4.8" fill="#5b5858" fill-opacity="0.85"/>
<rect x="952.9" y="520.2" width="2.5" height="4.8" fill="#5b5858" fill-opacity="0.85"/>
<rect x="952.2" y="533.8" width="4.0" height="1.5" fill="#5b5858" fill-opacity="0.85"/>
<rect x="952.9" y="544.0" width="2.5" height="4.8" fill="#5b5858" fill-opacity="0.85"/>
<rect x="952.9" y="555.9" width="2.5" height="4.8" fill="#5b5858" fill-opacity="0.85"/>
<rect x="952.2" y="569.5" width="4.0" height="1.5" fill="#5b5858" fill-opacity="0.85"/>
<rect x="952.9" y="579.7" width="2.5" height="4.8" fill="#5b5858" fill-opacity="0.85"/>
<rect x="952.9" y="591.7" width="2.5" height="4.8" fill="#5b5858" fill-opacity="0.85"/>
<line x1="460" y1="448.7" x2="954" y2="510.7" stroke="#5b5858" stroke-width="3" stroke-opacity="0.85"/>
<line x1="507.0" y1="454.6" x2="520.2" y2="456.2" stroke="#5b5858" stroke-width="5.6" stroke-opacity="0.85"/>
<line x1="542.7" y1="459.0" x2="555.1" y2="460.6" stroke="#5b5858" stroke-width="5.3" stroke-opacity="0.85"/>
<line x1="574.5" y1="463.0" x2="586.3" y2="464.5" stroke="#5b5858" stroke-width="5.0" stroke-opacity="0.85"/>
<line x1="629.1" y1="469.9" x2="639.8" y2="471.2" stroke="#5b5858" stroke-width="4.6" stroke-opacity="0.85"/>
<line x1="652.7" y1="472.9" x2="662.9" y2="474.1" stroke="#5b5858" stroke-width="4.4" stroke-opacity="0.85"/>
<line x1="674.2" y1="475.6" x2="683.9" y2="476.8" stroke="#5b5858" stroke-width="4.2" stroke-opacity="0.85"/>
<line x1="712.0" y1="480.3" x2="721.0" y2="481.4" stroke="#5b5858" stroke-width="3.8" stroke-opacity="0.85"/>
<line x1="728.8" y1="482.4" x2="737.4" y2="483.5" stroke="#5b5858" stroke-width="3.7" stroke-opacity="0.85"/>
<line x1="744.2" y1="484.3" x2="752.5" y2="485.4" stroke="#5b5858" stroke-width="3.5" stroke-opacity="0.85"/>
<line x1="772.0" y1="487.8" x2="779.7" y2="488.8" stroke="#5b5858" stroke-width="3.3" stroke-opacity="0.85"/>
<line x1="784.5" y1="489.4" x2="791.9" y2="490.3" stroke="#5b5858" stroke-width="3.2" stroke-opacity="0.85"/>
<line x1="796.1" y1="490.9" x2="803.3" y2="491.8" stroke="#5b5858" stroke-width="3.1" stroke-opacity="0.85"/>
<line x1="817.3" y1="493.5" x2="824.1" y2="494.4" stroke="#5b5858" stroke-width="2.9" stroke-opacity="0.85"/>
<line x1="827.0" y1="494.7" x2="833.6" y2="495.6" stroke="#5b5858" stroke-width="2.8" stroke-opacity="0.85"/>
<line x1="836.1" y1="495.9" x2="842.5" y2="496.7" stroke="#5b5858" stroke-width="2.7" stroke-opacity="0.85"/>
<line x1="852.9" y1="498.0" x2="858.9" y2="498.7" stroke="#5b5858" stroke-width="2.6" stroke-opacity="0.85"/>
<line x1="860.6" y1="498.9" x2="866.4" y2="499.7" stroke="#5b5858" stroke-width="2.5" stroke-opacity="0.85"/>
<line x1="867.9" y1="499.9" x2="873.6" y2="500.6" stroke="#5b5858" stroke-width="2.5" stroke-opacity="0.85"/>
<line x1="881.4" y1="501.6" x2="886.9" y2="502.2" stroke="#5b5858" stroke-width="2.3" stroke-opacity="0.85"/>
<line x1="887.7" y1="502.3" x2="893.0" y2="503.0" stroke="#5b5858" stroke-width="2.3" stroke-opacity="0.85"/>
<line x1="893.7" y1="503.1" x2="898.9" y2="503.8" stroke="#5b5858" stroke-width="2.2" stroke-opacity="0.85"/>
<line x1="904.9" y1="504.5" x2="909.9" y2="505.1" stroke="#5b5858" stroke-width="2.1" stroke-opacity="0.85"/>
<line x1="910.2" y1="505.2" x2="915.0" y2="505.8" stroke="#5b5858" stroke-width="2.1" stroke-opacity="0.85"/>
<line x1="915.2" y1="505.8" x2="919.9" y2="506.4" stroke="#5b5858" stroke-width="2.0" stroke-opacity="0.85"/>
<line x1="924.6" y1="507.0" x2="929.1" y2="507.5" stroke="#5b5858" stroke-width="2.0" stroke-opacity="0.85"/>
<line x1="929.0" y1="507.5" x2="933.4" y2="508.1" stroke="#5b5858" stroke-width="1.9" stroke-opacity="0.85"/>
<line x1="933.2" y1="508.1" x2="937.6" y2="508.6" stroke="#5b5858" stroke-width="1.9" stroke-opacity="0.85"/>
<line x1="941.2" y1="509.1" x2="945.4" y2="509.6" stroke="#5b5858" stroke-width="1.8" stroke-opacity="0.85"/>
<line x1="945.0" y1="509.5" x2="949.1" y2="510.1" stroke="#5b5858" stroke-width="1.8" stroke-opacity="0.85"/>
<line x1="948.7" y1="510.0" x2="952.7" y2="510.5" stroke="#5b5858" stroke-width="1.7" stroke-opacity="0.85"/>
<line x1="460" y1="618.3" x2="954" y2="558.3" stroke="#5b5858" stroke-width="3" stroke-opacity="0.85"/>
<line x1="507.0" y1="612.6" x2="520.2" y2="611.0" stroke="#5b5858" stroke-width="5.6" stroke-opacity="0.85"/>
<line x1="542.7" y1="608.3" x2="555.1" y2="606.8" stroke="#5b5858" stroke-width="5.3" stroke-opacity="0.85"/>
<line x1="574.5" y1="604.4" x2="586.3" y2="603.0" stroke="#5b5858" stroke-width="5.0" stroke-opacity="0.85"/>
<line x1="629.1" y1="597.8" x2="639.8" y2="596.5" stroke="#5b5858" stroke-width="4.6" stroke-opacity="0.85"/>
<line x1="652.7" y1="594.9" x2="662.9" y2="593.7" stroke="#5b5858" stroke-width="4.4" stroke-opacity="0.85"/>
<line x1="674.2" y1="592.3" x2="683.9" y2="591.1" stroke="#5b5858" stroke-width="4.2" stroke-opacity="0.85"/>
<line x1="712.0" y1="587.7" x2="721.0" y2="586.6" stroke="#5b5858" stroke-width="3.8" stroke-opacity="0.85"/>
<line x1="728.8" y1="585.7" x2="737.4" y2="584.6" stroke="#5b5858" stroke-width="3.7" stroke-opacity="0.85"/>
<line x1="744.2" y1="583.8" x2="752.5" y2="582.8" stroke="#5b5858" stroke-width="3.5" stroke-opacity="0.85"/>
<line x1="772.0" y1="580.4" x2="779.7" y2="579.5" stroke="#5b5858" stroke-width="3.3" stroke-opacity="0.85"/>
<line x1="784.5" y1="578.9" x2="791.9" y2="578.0" stroke="#5b5858" stroke-width="3.2" stroke-opacity="0.85"/>
<line x1="796.1" y1="577.5" x2="803.3" y2="576.6" stroke="#5b5858" stroke-width="3.1" stroke-opacity="0.85"/>
<line x1="817.3" y1="574.9" x2="824.1" y2="574.1" stroke="#5b5858" stroke-width="2.9" stroke-opacity="0.85"/>
<line x1="827.0" y1="573.8" x2="833.6" y2="573.0" stroke="#5b5858" stroke-width="2.8" stroke-opacity="0.85"/>
<line x1="836.1" y1="572.7" x2="842.5" y2="571.9" stroke="#5b5858" stroke-width="2.7" stroke-opacity="0.85"/>
<line x1="852.9" y1="570.6" x2="858.9" y2="569.9" stroke="#5b5858" stroke-width="2.6" stroke-opacity="0.85"/>
<line x1="860.6" y1="569.7" x2="866.4" y2="569.0" stroke="#5b5858" stroke-width="2.5" stroke-opacity="0.85"/>
<line x1="867.9" y1="568.8" x2="873.6" y2="568.1" stroke="#5b5858" stroke-width="2.5" stroke-opacity="0.85"/>
<line x1="881.4" y1="567.1" x2="886.9" y2="566.5" stroke="#5b5858" stroke-width="2.3" stroke-opacity="0.85"/>
<line x1="887.7" y1="566.4" x2="893.0" y2="565.7" stroke="#5b5858" stroke-width="2.3" stroke-opacity="0.85"/>
<line x1="893.7" y1="565.7" x2="898.9" y2="565.0" stroke="#5b5858" stroke-width="2.2" stroke-opacity="0.85"/>
<line x1="904.9" y1="564.3" x2="909.9" y2="563.7" stroke="#5b5858" stroke-width="2.1" stroke-opacity="0.85"/>
<line x1="910.2" y1="563.7" x2="915.0" y2="563.1" stroke="#5b5858" stroke-width="2.1" stroke-opacity="0.85"/>
<line x1="915.2" y1="563.1" x2="919.9" y2="562.5" stroke="#5b5858" stroke-width="2.0" stroke-opacity="0.85"/>
<line x1="924.6" y1="561.9" x2="929.1" y2="561.4" stroke="#5b5858" stroke-width="2.0" stroke-opacity="0.85"/>
<line x1="929.0" y1="561.4" x2="933.4" y2="560.8" stroke="#5b5858" stroke-width="1.9" stroke-opacity="0.85"/>
<line x1="933.2" y1="560.9" x2="937.6" y2="560.3" stroke="#5b5858" stroke-width="1.9" stroke-opacity="0.85"/>
<line x1="941.2" y1="559.9" x2="945.4" y2="559.4" stroke="#5b5858" stroke-width="1.8" stroke-opacity="0.85"/>
<line x1="945.0" y1="559.4" x2="949.1" y2="558.9" stroke="#5b5858" stroke-width="1.8" stroke-opacity="0.85"/>
<line x1="948.7" y1="559.0" x2="952.7" y2="558.5" stroke="#5b5858" stroke-width="1.7" stroke-opacity="0.85"/>
<line x1="460" y1="279" x2="954" y2="463" stroke="#656262" stroke-width="2"/>
<line x1="460" y1="788" x2="954" y2="606" stroke="#6a6565" stroke-width="3" stroke-opacity="0.8"/>
<path d="M1021,699 Q1024,688 1040,682 L1120,682 L1183,722 L1187,729 Q1180,741 1150,746 L1128,746 Q1090,744 1068,734 Z" fill="#536681"/>
<polygon points="1262,696 1328,696 1328,716 1367,757 1285,726" fill="#52647f"/>
<rect x="1079" y="469" width="134" height="269" rx="67" ry="67" fill="url(#capH)"/>
<g clip-path="url(#capclip)"><rect x="1079" y="469" width="134" height="269" fill="url(#capT)"/><rect x="1079" y="469" width="134" height="269" fill="url(#capHi)"/><rect x="1079" y="645" width="134" height="95" fill="url(#capV)"/></g>
<polygon points="1328,596.5 1368.5,609.6 1368.5,757.4 1328,716" fill="#4f5562"/>
<polygon points="1328,596.5 1449,596.5 1516.7,609.6 1368.5,609.6" fill="#9c979a"/>
<rect x="1368.5" y="609.6" width="148.2" height="147.8" fill="url(#cubeF)"/>
</svg>

<!-- INSPECTOR -->
<div class="a" style="left:1835px;top:92px;width:725px;height:1421px;background:#383838"></div>
<div class="a tb" style="left:1835px;top:92px;width:725px;height:24px"></div>
<div class="a tab" style="left:1835px;top:92px;width:119px;height:24px"></div>
<div class="a" style="left:1835px;top:92px;width:119px;height:2px;background:#3a79bb;border-radius:3px 3px 0 0"></div>
<svg style="left:1847px;top:98px" width="13" height="13" viewBox="0 0 13 13"><circle cx="6.5" cy="6.5" r="6.3" fill="#d2d2d2"/><rect x="5.6" y="5.5" width="1.8" height="5" fill="#3c3c3c"/><circle cx="6.5" cy="3.4" r="1.1" fill="#3c3c3c"/></svg>
<div class="t" style="left:1865px;top:92px;line-height:24px">Inspector</div>
<svg style="left:1966px;top:98px" width="12" height="14" viewBox="0 0 12 14"><circle cx="6" cy="5.5" r="5.2" fill="#c8c8c8"/><rect x="3.5" y="9" width="5" height="3.5" fill="#c8c8c8"/><rect x="4.2" y="12.5" width="3.6" height="1.5" fill="#c8c8c8"/></svg>
<div class="t" style="left:1984px;top:92px;line-height:24px">Lighting</div>
<svg style="left:2515px;top:97px" width="12" height="14" viewBox="0 0 12 14"><path d="M3,6.5 L3,3.8 Q3,1 6,1 Q8.6,1 8.9,3.4" fill="none" stroke="#c4c4c4" stroke-width="1.5"/><rect x="1" y="7" width="10" height="6" fill="none" stroke="#c4c4c4" stroke-width="1.5"/></svg>
<svg style="left:2541px;top:97px" width="4" height="14"><circle cx="2" cy="2" r="1.6" fill="#d2d2d2"/><circle cx="2" cy="7" r="1.6" fill="#d2d2d2"/><circle cx="2" cy="12" r="1.6" fill="#d2d2d2"/></svg>
<div class="a" style="left:1835px;top:116px;width:725px;height:73px;background:#3e3e3e"></div>
<div class="a" style="left:1835px;top:189px;width:725px;height:1px;background:#242424"></div>
<div class="a" style="left:1842px;top:124px;width:40px;height:40px;background:#565656"></div>
<svg style="left:1852px;top:132px" width="24" height="24" viewBox="0 0 24 24"><path d="M4,6 L7,3" stroke="#4a8f80" stroke-width="0.8"/><ellipse cx="7.5" cy="9.5" rx="2.6" ry="2.6" fill="#2a3450"/><rect x="5.5" y="11" width="5" height="5" fill="#2b3652"/><path d="M0.5,17.5 Q2,15.5 7,15.5 L14,15 Q18,15.5 18.5,18 Q18,20.5 14,20.5 L4,20 Q0.5,19.5 0.5,17.5Z" fill="#c4c7cc"/><path d="M3,16 L8,16 L7.5,18.5 L3,18.5Z" fill="#36507a"/><path d="M13,18.5 L18,18.5 L17,20.5 L12.5,20.5Z" fill="#4a5f85"/></svg>
<div class="t" style="left:1892px;top:121px;line-height:24px;font-size:17px;letter-spacing:0.15px;color:#c0c0c0">Aris_Original Import Settings</div>
<svg style="left:2500px;top:126px" width="13" height="13" viewBox="0 0 13 13"><circle cx="6.5" cy="6.5" r="6.3" fill="#d2d2d2"/><path d="M4.3,4.8 Q4.3,2.6 6.5,2.6 Q8.7,2.6 8.7,4.6 Q8.7,5.9 6.6,6.8 L6.6,8" fill="none" stroke="#3e3e3e" stroke-width="1.5"/><circle cx="6.6" cy="10" r="0.9" fill="#3e3e3e"/></svg>
<svg style="left:2518px;top:125px" width="15" height="15" viewBox="0 0 15 15"><path d="M0.5,4 L14.5,4 M0.5,11 L14.5,11" stroke="#d2d2d2" stroke-width="1.4"/><rect x="8" y="1.5" width="2.4" height="5" fill="#d2d2d2"/><rect x="3.5" y="8.5" width="2.4" height="5" fill="#d2d2d2"/></svg>
<svg style="left:2547px;top:126px" width="4" height="14"><circle cx="2" cy="2" r="1.6" fill="#d2d2d2"/><circle cx="2" cy="7" r="1.6" fill="#d2d2d2"/><circle cx="2" cy="12" r="1.6" fill="#d2d2d2"/></svg>
<div class="a btn" style="left:2499px;top:152px;width:55px;height:21px;border:1px solid #303030"></div>
<div class="t" style="left:2499px;top:152px;width:55px;text-align:center;line-height:21px;color:#e0e0e0">Open</div>
<!-- import tabs -->
<div class="a" style="left:2071px;top:194px;width:266px;height:30px;background:#2a2a2a;border-radius:4px"></div>
<div class="a" style="left:2072px;top:195px;width:55px;height:28px;background:#585858;border-radius:3px 0 0 3px"></div>
<div class="a" style="left:2128px;top:195px;width:38px;height:28px;background:#585858"></div>
<div class="a" style="left:2167px;top:195px;width:85px;height:28px;background:#585858"></div>
<div class="a" style="left:2253px;top:195px;width:83px;height:28px;background:#46607c;border-radius:0 3px 3px 0"></div>
<div class="t" style="left:2072px;top:195px;width:55px;text-align:center;line-height:28px;color:#e0e0e0">Model</div>
<div class="t" style="left:2128px;top:195px;width:38px;text-align:center;line-height:28px;color:#e0e0e0">Rig</div>
<div class="t" style="left:2167px;top:195px;width:85px;text-align:center;line-height:28px;color:#e0e0e0">Animation</div>
<div class="t" style="left:2253px;top:195px;width:83px;text-align:center;line-height:28px;color:#e8e8e8">Materials</div>
<!-- fields -->
<div class="t" style="left:1859px;top:234px;line-height:21px">Material Creation Mode</div>
<div class="a dd" style="left:2136px;top:234px;width:418px;height:21px;border:1px solid #2f2f2f"></div>
<div class="t" style="left:2141px;top:234px;line-height:21px;color:#e0e0e0">Import via MaterialDescription</div>
<svg style="left:2537px;top:242px" width="10" height="6"><polygon points="0,0 10,0 5,5.5" fill="#c4c4c4"/></svg>
<div class="t" style="left:1859px;top:259px;line-height:21px;color:#7bb2f0">Location</div>
<div class="a dd" style="left:2136px;top:259px;width:418px;height:22px;border:1px solid #3a79bb"></div>
<div class="t" style="left:2141px;top:259px;line-height:22px;color:#e0e0e0">Use Embedded Materials</div>
<svg style="left:2537px;top:267px" width="10" height="6"><polygon points="0,0 10,0 5,5.5" fill="#c4c4c4"/></svg>
<div class="t" style="left:1859px;top:284px;line-height:21px;color:#858585">Textures</div>
<div class="a" style="left:2135px;top:284px;width:419px;height:22px;background:#4a4a4a;border-radius:3px"></div>
<div class="t" style="left:2135px;top:284px;width:419px;text-align:center;line-height:22px;color:#8a8a8a">Extract Textures...</div>
<div class="t" style="left:1859px;top:311px;line-height:22px">Materials</div>
<div class="a" style="left:2117px;top:306px;width:443px;height:33px;border:4px solid #00e3fb"></div>
<div class="a btn" style="left:2135px;top:311px;width:419px;height:22px;border:1px solid #2c2c2c"></div>
<div class="t" style="left:2135px;top:311px;width:419px;text-align:center;line-height:22px;color:#e6e6e6">Extract Materials...</div>
<div class="a" style="left:1857px;top:339px;width:696px;height:46px;background:#3f3f3f;border:1px solid #262626;border-radius:3px"></div>
<svg style="left:1864px;top:345px" width="34" height="35" viewBox="0 0 34 35"><path d="M17,1 A16,16 0 1 0 25,31 L32,34 L29,26 A16,16 0 0 0 17,1Z" fill="#ececec"/><rect x="14.8" y="6" width="4.4" height="14" rx="2" fill="#333"/><circle cx="17" cy="25" r="2.4" fill="#333"/></svg>
<div class="t" style="left:1903px;top:353px;line-height:20px;font-size:13px;letter-spacing:0.55px;color:#c8c8c8">Materials are embedded inside the imported asset. Material assignments can be remapped below.</div>
<div class="t" style="left:1859px;top:389px;line-height:20px;font-weight:bold;color:#d2d2d2">Remapped Materials</div>
<svg style="left:1845px;top:416px" width="10" height="11"><polygon points="0,0 9,5 0,10" fill="#8a8a8a"/></svg>
<div class="t" style="left:1859px;top:411px;line-height:21px">On Demand Remap</div>
<div class="t" style="left:1859px;top:436px;line-height:21px">Aris_Original_Body</div>
<div class="a" style="left:2136px;top:436px;width:418px;height:21px;background:#2a2a2a;border:1px solid #212121;border-radius:3px"></div>
<svg style="left:2140px;top:440px" width="13" height="13" viewBox="0 0 13 13"><circle cx="6.5" cy="6.5" r="6" fill="#3a8fd0"/><circle cx="7.3" cy="5.8" r="4.3" fill="#8fd3ff"/><circle cx="8.2" cy="5" r="2.6" fill="#e8f6ff"/></svg>
<div class="t" style="left:2156px;top:436px;line-height:21px">None (Material)</div>
<div class="a" style="left:2531px;top:437px;width:22px;height:19px;background:#2f2f2f;border-radius:0 3px 3px 0"></div>
<svg style="left:2536px;top:440px" width="13" height="13" viewBox="0 0 13 13"><circle cx="6.5" cy="6.5" r="5.6" fill="none" stroke="#c4c4c4" stroke-width="1.3"/><circle cx="6.5" cy="6.5" r="2" fill="#c4c4c4"/></svg>
<div class="t" style="left:1859px;top:461px;line-height:21px">Aris_Original_EyeMouth</div>
<div class="a" style="left:2136px;top:461px;width:418px;height:21px;background:#2a2a2a;border:1px solid #212121;border-radius:3px"></div>
<svg style="left:2140px;top:465px" width="13" height="13" viewBox="0 0 13 13"><circle cx="6.5" cy="6.5" r="6" fill="#3a8fd0"/><circle cx="7.3" cy="5.8" r="4.3" fill="#8fd3ff"/><circle cx="8.2" cy="5" r="2.6" fill="#e8f6ff"/></svg>
<div class="t" style="left:2156px;top:461px;line-height:21px">None (Material)</div>
<div class="a" style="left:2531px;top:462px;width:22px;height:19px;background:#2f2f2f;border-radius:0 3px 3px 0"></div>
<svg style="left:2536px;top:465px" width="13" height="13" viewBox="0 0 13 13"><circle cx="6.5" cy="6.5" r="5.6" fill="none" stroke="#c4c4c4" stroke-width="1.3"/><circle cx="6.5" cy="6.5" r="2" fill="#c4c4c4"/></svg>
<div class="t" style="left:1859px;top:486px;line-height:21px">Aris_Original_Eyebrow</div>
<div class="a" style="left:2136px;top:486px;width:418px;height:21px;background:#2a2a2a;border:1px solid #212121;border-radius:3px"></div>
<svg style="left:2140px;top:490px" width="13" height="13" viewBox="0 0 13 13"><circle cx="6.5" cy="6.5" r="6" fill="#3a8fd0"/><circle cx="7.3" cy="5.8" r="4.3" fill="#8fd3ff"/><circle cx="8.2" cy="5" r="2.6" fill="#e8f6ff"/></svg>
<div class="t" style="left:2156px;top:486px;line-height:21px">None (Material)</div>
<div class="a" style="left:2531px;top:487px;width:22px;height:19px;background:#2f2f2f;border-radius:0 3px 3px 0"></div>
<svg style="left:2536px;top:490px" width="13" height="13" viewBox="0 0 13 13"><circle cx="6.5" cy="6.5" r="5.6" fill="none" stroke="#c4c4c4" stroke-width="1.3"/><circle cx="6.5" cy="6.5" r="2" fill="#c4c4c4"/></svg>
<div class="t" style="left:1859px;top:511px;line-height:21px">Aris_Original_Face</div>
<div class="a" style="left:2136px;top:511px;width:418px;height:21px;background:#2a2a2a;border:1px solid #212121;border-radius:3px"></div>
<svg style="left:2140px;top:515px" width="13" height="13" viewBox="0 0 13 13"><circle cx="6.5" cy="6.5" r="6" fill="#3a8fd0"/><circle cx="7.3" cy="5.8" r="4.3" fill="#8fd3ff"/><circle cx="8.2" cy="5" r="2.6" fill="#e8f6ff"/></svg>
<div class="t" style="left:2156px;top:511px;line-height:21px">None (Material)</div>
<div class="a" style="left:2531px;top:512px;width:22px;height:19px;background:#2f2f2f;border-radius:0 3px 3px 0"></div>
<svg style="left:2536px;top:515px" width="13" height="13" viewBox="0 0 13 13"><circle cx="6.5" cy="6.5" r="5.6" fill="none" stroke="#c4c4c4" stroke-width="1.3"/><circle cx="6.5" cy="6.5" r="2" fill="#c4c4c4"/></svg>
<div class="t" style="left:1859px;top:536px;line-height:21px">Aris_Original_Hair</div>
<div class="a" style="left:2136px;top:536px;width:418px;height:21px;background:#2a2a2a;border:1px solid #212121;border-radius:3px"></div>
<svg style="left:2140px;top:540px" width="13" height="13" viewBox="0 0 13 13"><circle cx="6.5" cy="6.5" r="6" fill="#3a8fd0"/><circle cx="7.3" cy="5.8" r="4.3" fill="#8fd3ff"/><circle cx="8.2" cy="5" r="2.6" fill="#e8f6ff"/></svg>
<div class="t" style="left:2156px;top:536px;line-height:21px">None (Material)</div>
<div class="a" style="left:2531px;top:537px;width:22px;height:19px;background:#2f2f2f;border-radius:0 3px 3px 0"></div>
<svg style="left:2536px;top:540px" width="13" height="13" viewBox="0 0 13 13"><circle cx="6.5" cy="6.5" r="5.6" fill="none" stroke="#c4c4c4" stroke-width="1.3"/><circle cx="6.5" cy="6.5" r="2" fill="#c4c4c4"/></svg>
<div class="t" style="left:1859px;top:561px;line-height:21px">Aris_Original_Halo</div>
<div class="a" style="left:2136px;top:561px;width:418px;height:21px;background:#2a2a2a;border:1px solid #212121;border-radius:3px"></div>
<svg style="left:2140px;top:565px" width="13" height="13" viewBox="0 0 13 13"><circle cx="6.5" cy="6.5" r="6" fill="#3a8fd0"/><circle cx="7.3" cy="5.8" r="4.3" fill="#8fd3ff"/><circle cx="8.2" cy="5" r="2.6" fill="#e8f6ff"/></svg>
<div class="t" style="left:2156px;top:561px;line-height:21px">None (Material)</div>
<div class="a" style="left:2531px;top:562px;width:22px;height:19px;background:#2f2f2f;border-radius:0 3px 3px 0"></div>
<svg style="left:2536px;top:565px" width="13" height="13" viewBox="0 0 13 13"><circle cx="6.5" cy="6.5" r="5.6" fill="none" stroke="#c4c4c4" stroke-width="1.3"/><circle cx="6.5" cy="6.5" r="2" fill="#c4c4c4"/></svg>
<div class="t" style="left:1859px;top:586px;line-height:21px">Aris_Original_Weapon</div>
<div class="a" style="left:2136px;top:586px;width:418px;height:21px;background:#2a2a2a;border:1px solid #212121;border-radius:3px"></div>
<svg style="left:2140px;top:590px" width="13" height="13" viewBox="0 0 13 13"><circle cx="6.5" cy="6.5" r="6" fill="#3a8fd0"/><circle cx="7.3" cy="5.8" r="4.3" fill="#8fd3ff"/><circle cx="8.2" cy="5" r="2.6" fill="#e8f6ff"/></svg>
<div class="t" style="left:2156px;top:586px;line-height:21px">None (Material)</div>
<div class="a" style="left:2531px;top:587px;width:22px;height:19px;background:#2f2f2f;border-radius:0 3px 3px 0"></div>
<svg style="left:2536px;top:590px" width="13" height="13" viewBox="0 0 13 13"><circle cx="6.5" cy="6.5" r="5.6" fill="none" stroke="#c4c4c4" stroke-width="1.3"/><circle cx="6.5" cy="6.5" r="2" fill="#c4c4c4"/></svg>
<div class="t" style="left:1859px;top:611px;line-height:21px">Aris_Original_Weapon_Glow</div>
<div class="a" style="left:2136px;top:611px;width:418px;height:21px;background:#2a2a2a;border:1px solid #212121;border-radius:3px"></div>
<svg style="left:2140px;top:615px" width="13" height="13" viewBox="0 0 13 13"><circle cx="6.5" cy="6.5" r="6" fill="#3a8fd0"/><circle cx="7.3" cy="5.8" r="4.3" fill="#8fd3ff"/><circle cx="8.2" cy="5" r="2.6" fill="#e8f6ff"/></svg>
<div class="t" style="left:2156px;top:611px;line-height:21px">None (Material)</div>
<div class="a" style="left:2531px;top:612px;width:22px;height:19px;background:#2f2f2f;border-radius:0 3px 3px 0"></div>
<svg style="left:2536px;top:615px" width="13" height="13" viewBox="0 0 13 13"><circle cx="6.5" cy="6.5" r="5.6" fill="none" stroke="#c4c4c4" stroke-width="1.3"/><circle cx="6.5" cy="6.5" r="2" fill="#c4c4c4"/></svg>
<div class="a" style="left:1857px;top:705px;width:696px;height:238px;background:#3b3b3b;border:1px solid #262626;border-radius:3px"></div>
<svg style="left:1874px;top:716px" width="10" height="11"><polygon points="0,0 9,5 0,10" fill="#8a8a8a"/></svg>
<div class="t" style="left:1886px;top:711.0px;line-height:20px">UnityEditor.Rendering.Universal.FBXMaterialDescriptionPreprocessor</div>
<svg style="left:1874px;top:745px" width="10" height="11"><polygon points="0,0 9,5 0,10" fill="#8a8a8a"/></svg>
<div class="t" style="left:1886px;top:739.7px;line-height:20px">UnityEditor.Rendering.Universal.SketchupMaterialDescriptionPreprocessor</div>
<svg style="left:1874px;top:773px" width="10" height="11"><polygon points="0,0 9,5 0,10" fill="#8a8a8a"/></svg>
<div class="t" style="left:1886px;top:768.4px;line-height:20px">UnityEditor.Rendering.Universal.ThreeDSMaterialDescriptionPreprocessor</div>
<svg style="left:1874px;top:802px" width="10" height="11"><polygon points="0,0 9,5 0,10" fill="#8a8a8a"/></svg>
<div class="t" style="left:1886px;top:797.1px;line-height:20px">UnityEditor.Rendering.Universal.AutodeskInteractiveMaterialImport</div>
<svg style="left:1874px;top:831px" width="10" height="11"><polygon points="0,0 9,5 0,10" fill="#8a8a8a"/></svg>
<div class="t" style="left:1886px;top:825.8px;line-height:20px">UnityEditor.Rendering.Universal.FBXArnoldSurfaceMaterialDescriptionPreprocessor</div>
<svg style="left:1874px;top:860px" width="10" height="11"><polygon points="0,0 9,5 0,10" fill="#8a8a8a"/></svg>
<div class="t" style="left:1886px;top:854.5px;line-height:20px">UnityEditor.Rendering.Universal.PhysicalMaterial3DsMaxPreprocessor</div>
<svg style="left:1874px;top:888px" width="10" height="11"><polygon points="0,0 9,5 0,10" fill="#8a8a8a"/></svg>
<div class="t" style="left:1886px;top:883.2px;line-height:20px">UnityEditor.Rendering.Universal.ModelPostprocessor</div>
<svg style="left:1874px;top:917px" width="10" height="11"><polygon points="0,0 9,5 0,10" fill="#8a8a8a"/></svg>
<div class="t" style="left:1886px;top:911.9px;line-height:20px">UnityEditor.ShaderGraph.ShaderGraphAssetPostProcessor</div>
<div class="a" style="left:2433px;top:646px;width:60px;height:23px;background:#4a4a4a;border-radius:3px"></div>
<div class="t" style="left:2433px;top:646px;width:60px;text-align:center;line-height:23px;color:#8e8e8e">Revert</div>
<div class="a" style="left:2500px;top:646px;width:54px;height:23px;background:#4a4a4a;border-radius:3px"></div>
<div class="t" style="left:2500px;top:646px;width:54px;text-align:center;line-height:23px;color:#8e8e8e">Apply</div>
<div class="a" style="left:1839px;top:682px;width:721px;height:23px;background:#3e3e3e;border-top:1px solid #303030"></div>
<svg style="left:1843px;top:689px" width="12" height="10"><polygon points="0,0 11,0 5.5,9" fill="#8a8a8a"/></svg>
<div class="t" style="left:1861px;top:683px;line-height:22px;font-weight:bold;color:#d2d2d2">Asset PostProcessors</div>


<!-- preview -->
<div class="a" style="left:1835px;top:1140px;width:725px;height:1px;background:#232323"></div>
<div class="a" style="left:1835px;top:1141px;width:725px;height:26px;background:#3c3c3c"></div>
<div class="t" style="left:1844px;top:1141px;line-height:26px;color:#d2d2d2;font-weight:bold;letter-spacing:0.2px">Aris_Original</div>
<div class="a" style="left:1946px;top:1152px;width:590px;height:1px;background:#2a2a2a"></div>
<div class="a" style="left:1946px;top:1153px;width:590px;height:1px;background:#555"></div>
<div class="a" style="left:1946px;top:1156px;width:590px;height:1px;background:#2a2a2a"></div>
<div class="a" style="left:1946px;top:1157px;width:590px;height:1px;background:#555"></div>
<div class="a" style="left:2539px;top:1141px;width:1px;height:26px;background:#2a2a2a"></div>
<svg style="left:2549px;top:1147px" width="4" height="14"><circle cx="2" cy="2" r="1.6" fill="#d2d2d2"/><circle cx="2" cy="7" r="1.6" fill="#d2d2d2"/><circle cx="2" cy="12" r="1.6" fill="#d2d2d2"/></svg>
<div class="a" style="left:1836px;top:1168px;width:722px;height:282px;background:#5a5a5a"></div>
<div class="a" style="left:2055px;top:1168px;width:285px;height:282px;background:#525252"></div>
<div class="t" style="left:2055px;top:1428px;width:285px;text-align:center;line-height:20px;font-size:13px;letter-spacing:0.6px;color:#6c6c6c">Static Preview</div>
<svg style="left:2120px;top:1225px" width="150" height="150" viewBox="2120 1225 150 150"><defs><filter id="mb" x="-10%" y="-10%" width="120%" height="120%"><feGaussianBlur stdDeviation="0.7"/></filter></defs><g filter="url(#mb)" opacity="0.88">
<path d="M2153,1252 Q2163,1240 2180,1232" stroke="#4f9a86" stroke-width="3.2" fill="none" stroke-opacity="0.8"/>
<path d="M2195,1283 Q2210,1290 2212,1300 L2222,1330 L2214,1332 L2200,1305Z" fill="#27324a"/>
<circle cx="2178" cy="1286" r="16" fill="#27324c"/>
<rect x="2160" y="1296" width="38" height="38" fill="#1f2638"/>
<path d="M2170,1312 L2176,1312 L2178,1334 L2170,1334Z" fill="#3f7cc4"/>
<path d="M2180,1310 L2190,1310 L2192,1330 L2182,1330Z" fill="#d8dde6"/>
<path d="M2127,1336 L2150,1332 L2150,1358 L2128,1357Z" fill="#bfc1c6"/>
<path d="M2145,1333 Q2165,1327 2182,1335 L2180,1352 L2147,1352Z" fill="#2c3b63"/>
<path d="M2175,1336 L2245,1330 Q2256,1336 2254,1350 L2250,1364 L2176,1366Z" fill="#b4b7bd"/>
<path d="M2150,1350 L2170,1348 L2172,1360 L2152,1362Z" fill="#e2e2e4"/>
<path d="M2160,1349 L2172,1349 L2172,1357 L2160,1357Z" fill="#a0603a"/>
<path d="M2210,1354 L2252,1352 L2250,1368 L2215,1369Z" fill="#4a5d86"/>
</g></svg>
<div class="a" style="left:1835px;top:1450px;width:725px;height:63px;background:#3c3c3c"></div>
<div class="a" style="left:1835px;top:1450px;width:725px;height:1px;background:#2a2a2a"></div>
<svg style="left:2530px;top:1458px" width="26" height="20" viewBox="0 0 26 20"><rect x="0" y="0" width="26" height="20" rx="10" fill="#1f4f91"/><path d="M8,5 L13,5 L19,11 L14,16 L8,10Z" fill="#fff"/><circle cx="10.5" cy="7.5" r="1.2" fill="#1f4f91"/></svg>
<div class="t" style="left:1840px;top:1486px;line-height:21px">AssetBundle</div>
<div class="a dd" style="left:1955px;top:1486px;width:456px;height:21px;border:1px solid #2f2f2f"></div>
<div class="t" style="left:1959px;top:1486px;line-height:21px;color:#e0e0e0">None</div>
<svg style="left:2395px;top:1494px" width="10" height="6"><polygon points="0,0 10,0 5,5.5" fill="#c4c4c4"/></svg>
<div class="a dd" style="left:2420px;top:1486px;width:135px;height:21px;border:1px solid #2f2f2f"></div>
<div class="t" style="left:2424px;top:1486px;line-height:21px;color:#e0e0e0">None</div>
<svg style="left:2539px;top:1494px" width="10" height="6"><polygon points="0,0 10,0 5,5.5" fill="#c4c4c4"/></svg>
<!-- PROJECT -->
<div class="a" style="left:0;top:930px;width:1833px;height:583px;background:#333333"></div>
<div class="a tb" style="left:0;top:930px;width:1833px;height:24px"></div>
<div class="a tab" style="left:0;top:930px;width:102px;height:24px"></div>
<div class="a bar" style="left:0;top:954px;width:1833px;height:25px"></div>
<div class="a" style="left:0;top:980px;width:259px;height:533px;background:#383838"></div>
<div class="a" style="left:259px;top:980px;width:1px;height:533px;background:#232323"></div>
<svg style="left:8px;top:935px" width="16" height="14" viewBox="0 0 16 14"><path d="M0.5,0.5 L6,0.5 L7.5,2.5 L15.5,2.5 L15.5,13.5 L0.5,13.5Z" fill="#c4c4c4"/></svg>
<div class="t" style="left:28px;top:930px;line-height:24px">Project</div>
<svg style="left:114px;top:936px" width="14" height="13" viewBox="0 0 14 13"><path d="M0.5,3 L5,6.5 L0.5,11 M5,6.5 L13.5,6.5 M10.5,3.5 L13.5,6.5 L10.5,9.5" fill="none" stroke="#c8c8c8" stroke-width="1.5"/></svg>
<div class="t" style="left:133px;top:930px;line-height:24px">Animator</div>
<svg style="left:228px;top:935px" width="15" height="15" viewBox="0 0 15 15"><circle cx="7.5" cy="7.5" r="7" fill="#c8c8c8"/><path d="M7.5,3 L7.5,8 L11,8" fill="none" stroke="#282828" stroke-width="1.6"/></svg>
<div class="t" style="left:248px;top:930px;line-height:24px">Animation</div>
<svg style="left:353px;top:935px" width="15" height="14" viewBox="0 0 15 14"><rect x="1" y="1" width="13" height="12" fill="none" stroke="#c8c8c8" stroke-width="1.6"/><path d="M3.5,1 L3.5,13 M11.5,1 L11.5,13" stroke="#c8c8c8" stroke-width="1.4"/></svg>
<div class="t" style="left:373px;top:930px;line-height:24px">Timeline</div>
<svg style="left:468px;top:935px" width="13" height="14" viewBox="0 0 13 14"><rect x="0.8" y="0.8" width="11.4" height="12.4" fill="none" stroke="#c8c8c8" stroke-width="1.5"/><path d="M2.5,4 L10.5,4 M2.5,6.5 L10.5,6.5 M2.5,9 L10.5,9" stroke="#c8c8c8" stroke-width="1.2"/></svg>
<div class="t" style="left:487px;top:930px;line-height:24px">Console</div>
<svg style="left:1793px;top:935px" width="12" height="14" viewBox="0 0 12 14"><path d="M3,6.5 L3,3.8 Q3,1 6,1 Q8.6,1 8.9,3.4" fill="none" stroke="#c4c4c4" stroke-width="1.5"/><rect x="1" y="7" width="10" height="6" fill="none" stroke="#c4c4c4" stroke-width="1.5"/></svg>
<svg style="left:1814px;top:935px" width="4" height="14"><circle cx="2" cy="2" r="1.6" fill="#d2d2d2"/><circle cx="2" cy="7" r="1.6" fill="#d2d2d2"/><circle cx="2" cy="12" r="1.6" fill="#d2d2d2"/></svg>
<svg style="left:8px;top:959px" width="16" height="16"><rect x="7" y="0" width="2" height="16" fill="#d2d2d2"/><rect x="0" y="7" width="16" height="2" fill="#d2d2d2"/></svg>
<svg style="left:29px;top:964px" width="10" height="6"><polygon points="0,0 9,0 4.5,5" fill="#c4c4c4"/></svg>
<div class="a" style="left:1251px;top:957px;width:396px;height:20px;background:#2a2a2a;border:1px solid #222;border-radius:4px"></div>
<div class="a" style="left:1627px;top:958px;width:19px;height:18px;background:#303030;border-radius:0 3px 3px 0"></div>
<svg style="left:1631px;top:961px" width="12" height="12" viewBox="0 0 12 12"><rect x="3" y="0.8" width="8.2" height="8.2" fill="none" stroke="#c4c4c4" stroke-width="1.2"/><rect x="0.6" y="7.8" width="3.6" height="3.6" fill="none" stroke="#c4c4c4" stroke-width="1.2"/><path d="M3.5,8.5 L8.5,3.5 M5.5,3.2 L8.8,3.2 L8.8,6.5" fill="none" stroke="#c4c4c4" stroke-width="1.2"/></svg>
<svg style="left:1257px;top:961px" width="12" height="12" viewBox="0 0 12 12"><circle cx="4.5" cy="4.5" r="3.3" fill="none" stroke="#ccc" stroke-width="1.5"/><path d="M7,7 L10.5,10.5" stroke="#ccc" stroke-width="1.8"/></svg>
<div class="a" style="left:1651px;top:954px;width:1px;height:25px;background:#2a2a2a"></div>
<svg style="left:1658px;top:958px" width="16" height="17" viewBox="0 0 16 17"><rect x="2" y="0.5" width="6" height="6" fill="#c4c4c4"/><circle cx="5" cy="12" r="4.5" fill="#c4c4c4"/><polygon points="11,6 15.5,14 6.5,14" fill="#c4c4c4"/></svg>
<div class="a" style="left:1684px;top:954px;width:1px;height:25px;background:#2a2a2a"></div>
<svg style="left:1693px;top:958px" width="16" height="16" viewBox="0 0 16 16"><path d="M9,1 L15,1 L15,7 L7,15 L1,9Z" fill="#c4c4c4"/><circle cx="11.5" cy="4.5" r="1.4" fill="#3c3c3c"/></svg>
<div class="a" style="left:1716px;top:954px;width:1px;height:25px;background:#2a2a2a"></div>
<svg style="left:1724px;top:957px" width="18" height="18" viewBox="0 0 18 18"><polygon points="5.5,0.5 12.5,0.5 17.5,5.5 17.5,12.5 12.5,17.5 5.5,17.5 0.5,12.5 0.5,5.5" fill="#c4c4c4"/><rect x="7.8" y="3.5" width="2.4" height="7.5" rx="1" fill="#3c3c3c"/><circle cx="9" cy="13.8" r="1.4" fill="#3c3c3c"/></svg>
<div class="a" style="left:1750px;top:954px;width:1px;height:25px;background:#2a2a2a"></div>
<svg style="left:1758px;top:958px" width="16" height="16" viewBox="0 0 16 16"><polygon points="8,0.5 10.2,5.5 15.5,5.8 11.4,9.3 12.8,14.8 8,11.8 3.2,14.8 4.6,9.3 0.5,5.8 5.8,5.5" fill="#a8a8a8"/></svg>
<div class="a" style="left:1781px;top:954px;width:1px;height:25px;background:#2a2a2a"></div>
<svg style="left:1789px;top:961px" width="18" height="11" viewBox="0 0 18 11"><path d="M0.5,5.5 Q9,-3 17.5,5.5 Q9,14 0.5,5.5Z" fill="#6a6a6a"/><circle cx="9" cy="5.5" r="2.5" fill="#3c3c3c"/></svg>
<div class="t" style="left:1808px;top:954px;line-height:25px;color:#c4c4c4;letter-spacing:0">19</div>
<svg style="left:6px;top:985px" width="12" height="10"><polygon points="0,0 11,0 5.5,9" fill="#8a8a8a"/></svg>
<svg style="left:22px;top:982px" width="16" height="16" viewBox="0 0 16 16"><polygon points="8,0.5 10.2,5.5 15.5,5.8 11.4,9.3 12.8,14.8 8,11.8 3.2,14.8 4.6,9.3 0.5,5.8 5.8,5.5" fill="#c4c4c4"/></svg>
<div class="t" style="left:44px;top:980px;line-height:20px;font-weight:bold;color:#d8d8d8">Favorites</div>
<svg style="left:39px;top:1003px" width="15" height="15" viewBox="0 0 15 15"><circle cx="6" cy="6" r="4.6" fill="none" stroke="#c4c4c4" stroke-width="1.6"/><path d="M9.3,9.3 L13.5,13.5" stroke="#c4c4c4" stroke-width="2"/></svg>
<div class="t" style="left:60px;top:1000px;line-height:20px">All Materials</div>
<svg style="left:39px;top:1023px" width="15" height="15" viewBox="0 0 15 15"><circle cx="6" cy="6" r="4.6" fill="none" stroke="#c4c4c4" stroke-width="1.6"/><path d="M9.3,9.3 L13.5,13.5" stroke="#c4c4c4" stroke-width="2"/></svg>
<div class="t" style="left:60px;top:1020px;line-height:20px">All Models</div>
<svg style="left:39px;top:1043px" width="15" height="15" viewBox="0 0 15 15"><circle cx="6" cy="6" r="4.6" fill="none" stroke="#c4c4c4" stroke-width="1.6"/><path d="M9.3,9.3 L13.5,13.5" stroke="#c4c4c4" stroke-width="2"/></svg>
<div class="t" style="left:60px;top:1040px;line-height:20px">All Prefabs</div>
<svg style="left:6px;top:1084px" width="12" height="10"><polygon points="0,0 11,0 5.5,9" fill="#8a8a8a"/></svg>
<svg style="left:22px;top:1082px" width="18" height="14" viewBox="0 0 18 14"><path d="M0.5,1 L6,1 L7.5,3 L14.5,3 L14.5,5 L3.5,5 L0.5,13 Z" fill="#c4c4c4"/><path d="M3.8,6 L17.5,6 L14.5,13.5 L0.8,13.5Z" fill="#c4c4c4"/></svg>
<div class="t" style="left:44px;top:1079px;line-height:20px;font-weight:bold;color:#d8d8d8">Assets</div>
<div class="a" style="left:0;top:1159px;width:259px;height:20px;background:#4d4d4d"></div>
<svg style="left:39px;top:1102px" width="16" height="14" viewBox="0 0 16 14"><path d="M0.5,1.5 L6,1.5 L7.5,3.5 L15.5,3.5 L15.5,13.5 L0.5,13.5Z" fill="#c4c4c4"/></svg>
<div class="t" style="left:60px;top:1099px;line-height:20px">InputActions</div>
<svg style="left:21px;top:1124px" width="12" height="10"><polygon points="0,0 11,0 5.5,9" fill="#8a8a8a"/></svg>
<svg style="left:39px;top:1122px" width="18" height="14" viewBox="0 0 18 14"><path d="M0.5,1 L6,1 L7.5,3 L14.5,3 L14.5,5 L3.5,5 L0.5,13 Z" fill="#c4c4c4"/><path d="M3.8,6 L17.5,6 L14.5,13.5 L0.8,13.5Z" fill="#c4c4c4"/></svg>
<div class="t" style="left:60px;top:1119px;line-height:20px">Resources</div>
<svg style="left:39px;top:1144px" width="12" height="10"><polygon points="0,0 11,0 5.5,9" fill="#8a8a8a"/></svg>
<svg style="left:57px;top:1142px" width="18" height="14" viewBox="0 0 18 14"><path d="M0.5,1 L6,1 L7.5,3 L14.5,3 L14.5,5 L3.5,5 L0.5,13 Z" fill="#c4c4c4"/><path d="M3.8,6 L17.5,6 L14.5,13.5 L0.8,13.5Z" fill="#c4c4c4"/></svg>
<div class="t" style="left:77px;top:1139px;line-height:20px">FBX</div>
<svg style="left:74px;top:1162px" width="16" height="14" viewBox="0 0 16 14"><path d="M0.5,1.5 L6,1.5 L7.5,3.5 L15.5,3.5 L15.5,13.5 L0.5,13.5Z" fill="#c4c4c4"/></svg>
<div class="t" style="left:95px;top:1159px;line-height:20px">Aris</div>
<svg style="left:74px;top:1182px" width="16" height="14" viewBox="0 0 16 14"><path d="M0.5,1.5 L6,1.5 L7.5,3.5 L15.5,3.5 L15.5,13.5 L0.5,13.5Z" fill="#c4c4c4"/></svg>
<div class="t" style="left:95px;top:1179px;line-height:20px">Midori</div>
<svg style="left:74px;top:1202px" width="16" height="14" viewBox="0 0 16 14"><path d="M0.5,1.5 L6,1.5 L7.5,3.5 L15.5,3.5 L15.5,13.5 L0.5,13.5Z" fill="#c4c4c4"/></svg>
<div class="t" style="left:95px;top:1199px;line-height:20px">Momoi</div>
<svg style="left:74px;top:1222px" width="16" height="14" viewBox="0 0 16 14"><path d="M0.5,1.5 L6,1.5 L7.5,3.5 L15.5,3.5 L15.5,13.5 L0.5,13.5Z" fill="#c4c4c4"/></svg>
<div class="t" style="left:95px;top:1219px;line-height:20px">Yuzu</div>
<svg style="left:23px;top:1244px" width="10" height="11"><polygon points="0,0 9,5 0,10" fill="#8a8a8a"/></svg>
<svg style="left:39px;top:1242px" width="16" height="14" viewBox="0 0 16 14"><path d="M0.5,1.5 L6,1.5 L7.5,3.5 L15.5,3.5 L15.5,13.5 L0.5,13.5Z" fill="#c4c4c4"/></svg>
<div class="t" style="left:60px;top:1239px;line-height:20px">Samples</div>
<svg style="left:39px;top:1262px" width="16" height="14" viewBox="0 0 16 14"><path d="M0.5,1.5 L6,1.5 L7.5,3.5 L15.5,3.5 L15.5,13.5 L0.5,13.5Z" fill="#c4c4c4"/></svg>
<div class="t" style="left:60px;top:1259px;line-height:20px">Scenes</div>
<svg style="left:39px;top:1282px" width="16" height="14" viewBox="0 0 16 14"><path d="M0.5,1.5 L6,1.5 L7.5,3.5 L15.5,3.5 L15.5,13.5 L0.5,13.5Z" fill="#c4c4c4"/></svg>
<div class="t" style="left:60px;top:1279px;line-height:20px">Scripts</div>
<svg style="left:39px;top:1302px" width="16" height="14" viewBox="0 0 16 14"><path d="M0.5,1.5 L6,1.5 L7.5,3.5 L15.5,3.5 L15.5,13.5 L0.5,13.5Z" fill="#c4c4c4"/></svg>
<div class="t" style="left:60px;top:1299px;line-height:20px">Settings</div>
<svg style="left:7px;top:1324px" width="10" height="11"><polygon points="0,0 9,5 0,10" fill="#8a8a8a"/></svg>
<svg style="left:22px;top:1322px" width="16" height="14" viewBox="0 0 16 14"><path d="M0.5,1.5 L6,1.5 L7.5,3.5 L15.5,3.5 L15.5,13.5 L0.5,13.5Z" fill="#c4c4c4"/></svg>
<div class="t" style="left:44px;top:1319px;line-height:20px;font-weight:bold;color:#d8d8d8">Packages</div>
<div class="a" style="left:260px;top:980px;width:1573px;height:26px;background:#3a3a3a"></div>
<div class="a" style="left:260px;top:1006px;width:1573px;height:1px;background:#2e2e2e"></div>
<div class="t" style="left:265px;top:980px;line-height:26px;color:#c8c8c8">Assets</div>
<svg style="left:321px;top:987px" width="8" height="12"><path d="M1.5,1 L6.5,6 L1.5,11" fill="none" stroke="#8a8a8a" stroke-width="1.6"/></svg>
<div class="t" style="left:335px;top:980px;line-height:26px;color:#c8c8c8">Resources</div>
<svg style="left:420px;top:987px" width="8" height="12"><path d="M1.5,1 L6.5,6 L1.5,11" fill="none" stroke="#8a8a8a" stroke-width="1.6"/></svg>
<div class="t" style="left:434px;top:980px;line-height:26px;color:#c8c8c8">FBX</div>
<svg style="left:471px;top:987px" width="8" height="12"><path d="M1.5,1 L6.5,6 L1.5,11" fill="none" stroke="#8a8a8a" stroke-width="1.6"/></svg>
<div class="t" style="left:485px;top:980px;line-height:26px;font-weight:bold;color:#dedede">Aris</div>
<div class="a" style="left:260px;top:1007px;width:1573px;height:20px;background:#474747"></div>
<svg style="left:263px;top:1012px" width="10" height="11"><polygon points="0,0 9,5 0,10" fill="#8a8a8a"/></svg>
<svg style="left:280px;top:1008px" width="18" height="18" viewBox="0 0 18 18"><polygon points="9,5 17,2.5 17,13 9,17" fill="#7fd0fa"/><polygon points="1,3 9,5 9,17 1,14" fill="#c8c8c8"/><polygon points="1,3 8,0.5 16,2 9,5" fill="#9fdcff"/><polygon points="4,2 11,0.5 12,1.5 6,3.5" fill="#5cbdf0"/></svg>
<div class="t" style="left:302px;top:1007px;line-height:20px">Aris_Original</div>
<div class="a" style="left:280px;top:1027px;width:20px;height:20px;background:linear-gradient(135deg,#f4f4f6 0%,#dcdde2 60%,#2b3f6a 100%)"></div>
<div class="t" style="left:302px;top:1027px;line-height:20px">Aris_Original_Body</div>
<div class="a" style="left:280px;top:1047px;width:20px;height:20px;background:linear-gradient(90deg,#00a000,#12d81a 50%,#00a000)"></div>
<div class="t" style="left:302px;top:1047px;line-height:20px">Aris_Original_Body_Mask</div>
<div class="a" style="left:280px;top:1067px;width:20px;height:20px;background:radial-gradient(circle at 50% 60%,#6fb0ff 0%,#2e6fc0 60%,#d8e8f8 100%)"></div>
<div class="t" style="left:302px;top:1067px;line-height:20px">Aris_Original_EyeMouth</div>
<div class="a" style="left:280px;top:1087px;width:20px;height:20px;background:linear-gradient(180deg,#f3e2dd,#efdcd6)"></div>
<div class="t" style="left:302px;top:1087px;line-height:20px">Aris_Original_Face</div>
<div class="a" style="left:280px;top:1107px;width:20px;height:20px;background:#008c00"></div>
<div class="t" style="left:302px;top:1107px;line-height:20px">Aris_Original_Face_Mask</div>
<div class="a" style="left:280px;top:1127px;width:20px;height:20px;background:linear-gradient(180deg,#4e5a72,#6e7a90 50%,#3c475c)"></div>
<div class="t" style="left:302px;top:1127px;line-height:20px">Aris_Original_Hair</div>
<div class="a" style="left:280px;top:1147px;width:20px;height:20px;background:linear-gradient(90deg,#0a7a0a,#14b014 50%,#0a7a0a)"></div>
<div class="t" style="left:302px;top:1147px;line-height:20px">Aris_Original_Hair_Mask</div>
<div class="a" style="left:280px;top:1167px;width:20px;height:20px;background:linear-gradient(135deg,#f2b8c0,#e04060 50%,#f6c8d0)"></div>
<div class="t" style="left:302px;top:1167px;line-height:20px">Aris_Original_Hair_Spec</div>
<div class="a" style="left:280px;top:1187px;width:20px;height:20px;background:linear-gradient(180deg,#b8f5e6,#a6eedb)"></div>
<div class="t" style="left:302px;top:1187px;line-height:20px">Aris_Original_Halo</div>
<div class="a" style="left:280px;top:1207px;width:20px;height:20px;background:linear-gradient(135deg,#f4eef0 0%,#e8e0e4 60%,#4a3a30 100%)"></div>
<div class="t" style="left:302px;top:1207px;line-height:20px">Aris_Original_Weapon</div>
<div class="a" style="left:280px;top:1227px;width:20px;height:20px;background:linear-gradient(180deg,#4a6cf0,#3c5ee8)"></div>
<div class="t" style="left:302px;top:1227px;line-height:20px">Aris_Original_Weapon_Mask</div>
<div class="a" style="left:260px;top:1488px;width:1573px;height:25px;background:#3e3e3e"></div>
<svg style="left:265px;top:1491px" width="18" height="18" viewBox="0 0 18 18"><polygon points="9,5 17,2.5 17,13 9,17" fill="#7fd0fa"/><polygon points="1,3 9,5 9,17 1,14" fill="#c8c8c8"/><polygon points="1,3 8,0.5 16,2 9,5" fill="#9fdcff"/></svg>
<div class="t" style="left:285px;top:1488px;line-height:25px">Assets/Resources/FBX/Aris/Aris_Original.fbx</div>
<div class="a" style="left:1750px;top:1499px;width:63px;height:2px;background:#5e5e5e"></div>
<div class="a" style="left:1744px;top:1494px;width:12px;height:12px;border-radius:50%;background:#999"></div>

<!-- STATUS -->
<div class="a" style="left:0;top:1513px;width:2560px;height:27px;background:#191919"></div>
<div class="a" style="left:2426px;top:1513px;width:1px;height:27px;background:#262626"></div>
<svg style="left:2434px;top:1518px" width="18" height="18" viewBox="0 0 18 18"><ellipse cx="9" cy="10.5" rx="5" ry="6" fill="#bdbdbd"/><circle cx="9" cy="4.3" r="2.5" fill="#bdbdbd"/><path d="M1.5,6 L4.5,8 M16.5,6 L13.5,8 M1,11 L4,11 M17,11 L14,11 M2,16 L5,13.5 M16,16 L13,13.5 M1,1 L17,17" stroke="#bdbdbd" stroke-width="1.5"/></svg>
<div class="a" style="left:2459px;top:1513px;width:1px;height:27px;background:#262626"></div>
<svg style="left:2467px;top:1518px" width="18" height="18" viewBox="0 0 18 18"><ellipse cx="9" cy="3.5" rx="7" ry="2.8" fill="#bdbdbd"/><path d="M2,6 Q9,10 16,6 L16,8.5 Q9,12.5 2,8.5Z M2,10.5 Q9,14.5 16,10.5 L16,13.5 Q9,17.5 2,13.5Z" fill="#bdbdbd"/><path d="M1,1 L17,17" stroke="#191919" stroke-width="2.5"/><path d="M1.5,1.5 L16.5,16.5" stroke="#bdbdbd" stroke-width="1.3"/></svg>
<div class="a" style="left:2493px;top:1513px;width:1px;height:27px;background:#262626"></div>
<svg style="left:2501px;top:1518px" width="18" height="18" viewBox="0 0 18 18"><circle cx="9" cy="9" r="7.3" fill="none" stroke="#bdbdbd" stroke-width="1.6"/><circle cx="9" cy="9" r="3" fill="none" stroke="#bdbdbd" stroke-width="1.6"/><path d="M1,1 L17,17" stroke="#bdbdbd" stroke-width="1.6"/></svg>
<div class="a" style="left:2525px;top:1513px;width:1px;height:27px;background:#262626"></div>
<svg style="left:2533px;top:1518px" width="18" height="18" viewBox="0 0 18 18"><circle cx="9" cy="9" r="7.8" fill="none" stroke="#c8c8c8" stroke-width="1.5"/><path d="M5,9.5 L8,12.5 L13,6" fill="none" stroke="#c8c8c8" stroke-width="1.6"/></svg>
</body></html>
